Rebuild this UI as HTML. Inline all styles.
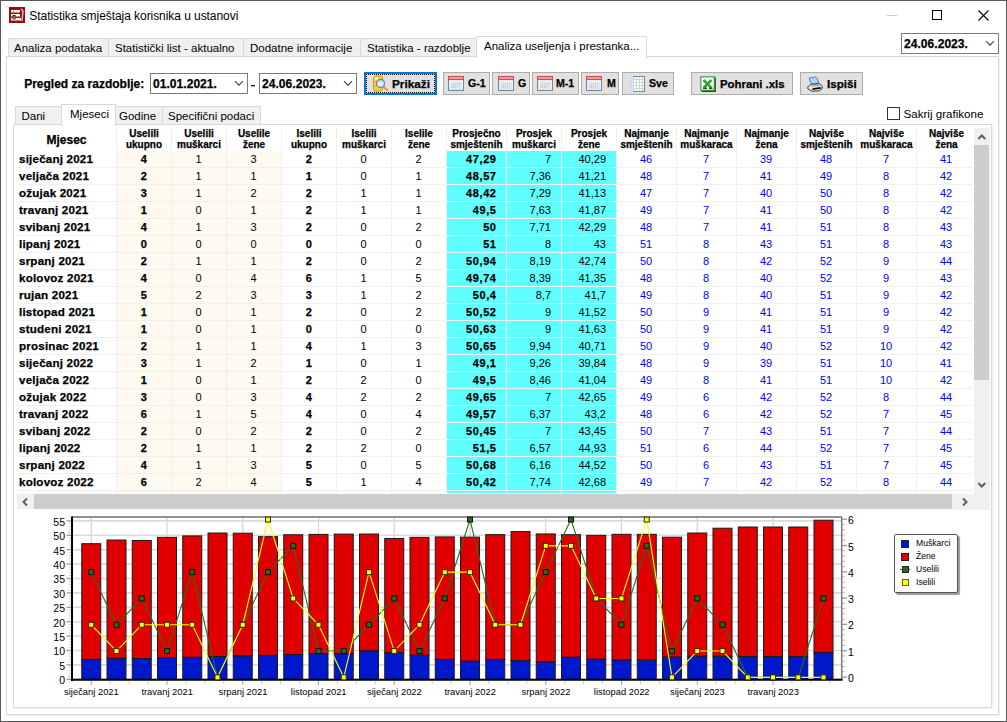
<!DOCTYPE html>
<html><head><meta charset="utf-8"><title>Statistika</title>
<style>
html,body{margin:0;padding:0;}
body{width:1007px;height:722px;position:relative;overflow:hidden;background:#fff;font-family:"Liberation Sans", sans-serif;}
</style></head><body>
<div style="position:absolute;left:0;top:0;width:1005px;height:720px;border:1px solid #595959;"></div>
<svg style="position:absolute;left:9px;top:7px" width="16" height="16" viewBox="0 0 16 16">
<rect x="0" y="0" width="16" height="16" fill="#9c0a0a"/>
<rect x="2" y="3" width="9" height="2.5" fill="#fff"/>
<rect x="2" y="7" width="9" height="2.5" fill="#fff"/>
<rect x="2" y="11" width="10" height="2.5" fill="#fff"/>
<path d="M12 2 L14 4 L13 14" stroke="#f3d0d0" stroke-width="1.3" fill="none"/>
<circle cx="5" cy="10.5" r="2.3" fill="#6a6a6a"/><path d="M3.3 9.2 Q5 7.6 6.8 9" stroke="#222" stroke-width="1" fill="none"/><rect x="4" y="4" width="1" height="1" fill="#c33"/>
</svg>
<div style="position:absolute;left:29.3px;top:6px;font-size:12px;line-height:20px;font-weight:400;color:#000;text-align:left;white-space:pre;letter-spacing:-0.06px;">Statistika smještaja korisnika u ustanovi</div>
<div style="position:absolute;left:887px;top:15px;width:10px;height:1px;background:#c9c9c9;"></div>
<div style="position:absolute;left:932px;top:10px;width:8px;height:8px;border:1px solid #000;"></div>
<svg style="position:absolute;left:977px;top:9px" width="13" height="13" viewBox="0 0 13 13">
<path d="M1.5 1.5 L11.5 11.5 M11.5 1.5 L1.5 11.5" stroke="#000" stroke-width="1.1"/></svg>
<div style="position:absolute;left:6px;top:56px;width:991px;height:657px;border:1px solid #d9d9d9;box-shadow:1px 1px 0 #f0f0f0;background:#fff"></div>
<div style="position:absolute;left:8px;top:38px;width:99px;height:17px;border:1px solid #d9d9d9;border-bottom:none;background:#f0f0f0"></div>
<div style="position:absolute;left:14px;top:38px;font-size:11.5px;line-height:20px;font-weight:400;color:#000;text-align:left;white-space:pre;">Analiza podataka</div>
<div style="position:absolute;left:108px;top:38px;width:134px;height:17px;border:1px solid #d9d9d9;border-bottom:none;background:#f0f0f0"></div>
<div style="position:absolute;left:115px;top:38px;font-size:11.5px;line-height:20px;font-weight:400;color:#000;text-align:left;white-space:pre;">Statistički list - aktualno</div>
<div style="position:absolute;left:243px;top:38px;width:116px;height:17px;border:1px solid #d9d9d9;border-bottom:none;background:#f0f0f0"></div>
<div style="position:absolute;left:250px;top:38px;font-size:11.5px;line-height:20px;font-weight:400;color:#000;text-align:left;white-space:pre;">Dodatne informacije</div>
<div style="position:absolute;left:360px;top:38px;width:115px;height:17px;border:1px solid #d9d9d9;border-bottom:none;background:#f0f0f0"></div>
<div style="position:absolute;left:367px;top:38px;font-size:11.5px;line-height:20px;font-weight:400;color:#000;text-align:left;white-space:pre;">Statistika - razdoblje</div>
<div style="position:absolute;left:476px;top:36px;width:169px;height:21px;border:1px solid #d9d9d9;border-bottom:none;background:#fff"></div>
<div style="position:absolute;left:484px;top:36px;font-size:11.5px;line-height:20px;font-weight:400;color:#000;text-align:left;white-space:pre;">Analiza useljenja i prestanka...</div>
<div style="position:absolute;left:901px;top:33px;width:96px;height:19px;border:1px solid #7a7a7a;background:#fff"></div>
<div style="position:absolute;left:904px;top:34px;font-size:12px;line-height:20px;font-weight:700;color:#000;text-align:left;white-space:pre;letter-spacing:0.05px;-webkit-text-stroke:0.25px #000;">24.06.2023.</div>
<svg style="position:absolute;left:985px;top:40px" width="11" height="7" viewBox="0 0 11 7"><path d="M1 1.2 L5 5.2 L9 1.2" stroke="#444" stroke-width="1.15" fill="none"/></svg>
<div style="position:absolute;left:24.2px;top:74px;font-size:12px;line-height:20px;font-weight:700;color:#000;text-align:left;white-space:pre;-webkit-text-stroke:0.25px #000;">Pregled za razdoblje:</div>
<div style="position:absolute;left:150px;top:73px;width:96px;height:19px;border:1px solid #7a7a7a;background:#fff"></div>
<div style="position:absolute;left:153px;top:74px;font-size:12px;line-height:20px;font-weight:700;color:#000;text-align:left;white-space:pre;letter-spacing:0.05px;-webkit-text-stroke:0.25px #000;">01.01.2021.</div>
<svg style="position:absolute;left:234px;top:80px" width="11" height="7" viewBox="0 0 11 7"><path d="M1 1.2 L5 5.2 L9 1.2" stroke="#444" stroke-width="1.15" fill="none"/></svg>
<div style="position:absolute;left:251px;top:85px;width:4px;height:1px;background:#111;"></div>
<div style="position:absolute;left:251px;top:86px;width:4px;height:1px;background:#aaa;"></div>
<div style="position:absolute;left:259px;top:73px;width:96px;height:19px;border:1px solid #7a7a7a;background:#fff"></div>
<div style="position:absolute;left:262px;top:74px;font-size:12px;line-height:20px;font-weight:700;color:#000;text-align:left;white-space:pre;letter-spacing:0.05px;-webkit-text-stroke:0.25px #000;">24.06.2023.</div>
<svg style="position:absolute;left:343px;top:80px" width="11" height="7" viewBox="0 0 11 7"><path d="M1 1.2 L5 5.2 L9 1.2" stroke="#444" stroke-width="1.15" fill="none"/></svg>
<div style="position:absolute;left:364px;top:72px;width:69px;height:19px;border:2px solid #0078d7;background:#e1e1e1"></div>
<div style="position:absolute;left:366px;top:74px;width:67px;height:17px;border:1px dotted #000;"></div>
<svg style="position:absolute;left:371px;top:75px" width="18" height="17" viewBox="0 0 18 17">
<path d="M2.5 2.5 L4 1 H10 L11.5 2.5 V14.5 L10 16 H4 L2.5 14.5 Z" fill="#f7d33a" stroke="#c79a12" stroke-width="1"/>
<path d="M3.5 6.5 H7 M3.5 10.5 H7" stroke="#d8a819" stroke-width="1"/>
<rect x="4" y="2.5" width="3" height="2" fill="#fff7c0"/>
<path d="M12.5 11.5 L16 15" stroke="#f29a35" stroke-width="2.4" stroke-linecap="round"/>
<circle cx="9.5" cy="8.5" r="4" fill="#d9f3fc" stroke="#6d7fb8" stroke-width="1.3"/>
<path d="M7.5 7 Q8.5 5.5 10.5 6" stroke="#8fc8ee" stroke-width="1.2" fill="none"/>
</svg>
<div style="position:absolute;left:392px;top:74px;font-size:11.8px;line-height:20px;font-weight:700;color:#000;text-align:left;white-space:pre;-webkit-text-stroke:0.25px #000;">Prikaži</div>
<div style="position:absolute;left:443px;top:72px;width:45px;height:21px;border:1px solid #adadad;background:#e1e1e1"></div>
<svg style="position:absolute;left:448px;top:76px" width="16" height="16" viewBox="0 0 16 16" shape-rendering="crispEdges">
<rect x="1" y="4" width="14" height="11" fill="#e6e6e6"/>
<rect x="2" y="5" width="12" height="9" fill="none" stroke="#f2f2f2" stroke-width="1"/>
<path d="M0.5 4 V14.5 H15.5 V4" fill="none" stroke="#6f8aa3" stroke-width="1"/>
<rect x="0.5" y="0.5" width="15" height="3" fill="#f59a9e" stroke="#cf4d56" stroke-width="1"/>
<rect x="5" y="7" width="1" height="1" fill="#a9c6dc"/><rect x="7" y="7" width="1" height="1" fill="#a9c6dc"/><rect x="9" y="7" width="1" height="1" fill="#a9c6dc"/><rect x="11" y="7" width="1" height="1" fill="#a9c6dc"/><rect x="3" y="9" width="1" height="1" fill="#a9c6dc"/><rect x="5" y="9" width="1" height="1" fill="#a9c6dc"/><rect x="7" y="9" width="1" height="1" fill="#a9c6dc"/><rect x="9" y="9" width="1" height="1" fill="#a9c6dc"/><rect x="11" y="9" width="1" height="1" fill="#a9c6dc"/><rect x="3" y="11" width="1" height="1" fill="#a9c6dc"/><rect x="5" y="11" width="1" height="1" fill="#a9c6dc"/><rect x="7" y="11" width="1" height="1" fill="#a9c6dc"/><rect x="9" y="11" width="1" height="1" fill="#a9c6dc"/></svg>
<div style="position:absolute;left:468px;top:73px;font-size:10.6px;line-height:20px;font-weight:700;color:#000;text-align:left;white-space:pre;-webkit-text-stroke:0.25px #000;">G-1</div>
<div style="position:absolute;left:492px;top:72px;width:36px;height:21px;border:1px solid #adadad;background:#e1e1e1"></div>
<svg style="position:absolute;left:498px;top:76px" width="16" height="16" viewBox="0 0 16 16" shape-rendering="crispEdges">
<rect x="1" y="4" width="14" height="11" fill="#e6e6e6"/>
<rect x="2" y="5" width="12" height="9" fill="none" stroke="#f2f2f2" stroke-width="1"/>
<path d="M0.5 4 V14.5 H15.5 V4" fill="none" stroke="#6f8aa3" stroke-width="1"/>
<rect x="0.5" y="0.5" width="15" height="3" fill="#f59a9e" stroke="#cf4d56" stroke-width="1"/>
<rect x="5" y="7" width="1" height="1" fill="#a9c6dc"/><rect x="7" y="7" width="1" height="1" fill="#a9c6dc"/><rect x="9" y="7" width="1" height="1" fill="#a9c6dc"/><rect x="11" y="7" width="1" height="1" fill="#a9c6dc"/><rect x="3" y="9" width="1" height="1" fill="#a9c6dc"/><rect x="5" y="9" width="1" height="1" fill="#a9c6dc"/><rect x="7" y="9" width="1" height="1" fill="#a9c6dc"/><rect x="9" y="9" width="1" height="1" fill="#a9c6dc"/><rect x="11" y="9" width="1" height="1" fill="#a9c6dc"/><rect x="3" y="11" width="1" height="1" fill="#a9c6dc"/><rect x="5" y="11" width="1" height="1" fill="#a9c6dc"/><rect x="7" y="11" width="1" height="1" fill="#a9c6dc"/><rect x="9" y="11" width="1" height="1" fill="#a9c6dc"/></svg>
<div style="position:absolute;left:518px;top:73px;font-size:10.6px;line-height:20px;font-weight:700;color:#000;text-align:left;white-space:pre;-webkit-text-stroke:0.25px #000;">G</div>
<div style="position:absolute;left:532px;top:72px;width:45px;height:21px;border:1px solid #adadad;background:#e1e1e1"></div>
<svg style="position:absolute;left:537px;top:76px" width="16" height="16" viewBox="0 0 16 16" shape-rendering="crispEdges">
<rect x="1" y="4" width="14" height="11" fill="#e6e6e6"/>
<rect x="2" y="5" width="12" height="9" fill="none" stroke="#f2f2f2" stroke-width="1"/>
<path d="M0.5 4 V14.5 H15.5 V4" fill="none" stroke="#6f8aa3" stroke-width="1"/>
<rect x="0.5" y="0.5" width="15" height="3" fill="#f59a9e" stroke="#cf4d56" stroke-width="1"/>
<rect x="5" y="7" width="1" height="1" fill="#a9c6dc"/><rect x="7" y="7" width="1" height="1" fill="#a9c6dc"/><rect x="9" y="7" width="1" height="1" fill="#a9c6dc"/><rect x="11" y="7" width="1" height="1" fill="#a9c6dc"/><rect x="3" y="9" width="1" height="1" fill="#a9c6dc"/><rect x="5" y="9" width="1" height="1" fill="#a9c6dc"/><rect x="7" y="9" width="1" height="1" fill="#a9c6dc"/><rect x="9" y="9" width="1" height="1" fill="#a9c6dc"/><rect x="11" y="9" width="1" height="1" fill="#a9c6dc"/><rect x="3" y="11" width="1" height="1" fill="#a9c6dc"/><rect x="5" y="11" width="1" height="1" fill="#a9c6dc"/><rect x="7" y="11" width="1" height="1" fill="#a9c6dc"/><rect x="9" y="11" width="1" height="1" fill="#a9c6dc"/></svg>
<div style="position:absolute;left:556px;top:73px;font-size:10.6px;line-height:20px;font-weight:700;color:#000;text-align:left;white-space:pre;-webkit-text-stroke:0.25px #000;">M-1</div>
<div style="position:absolute;left:581px;top:72px;width:36px;height:21px;border:1px solid #adadad;background:#e1e1e1"></div>
<svg style="position:absolute;left:586px;top:76px" width="16" height="16" viewBox="0 0 16 16" shape-rendering="crispEdges">
<rect x="1" y="4" width="14" height="11" fill="#e6e6e6"/>
<rect x="2" y="5" width="12" height="9" fill="none" stroke="#f2f2f2" stroke-width="1"/>
<path d="M0.5 4 V14.5 H15.5 V4" fill="none" stroke="#6f8aa3" stroke-width="1"/>
<rect x="0.5" y="0.5" width="15" height="3" fill="#f59a9e" stroke="#cf4d56" stroke-width="1"/>
<rect x="5" y="7" width="1" height="1" fill="#a9c6dc"/><rect x="7" y="7" width="1" height="1" fill="#a9c6dc"/><rect x="9" y="7" width="1" height="1" fill="#a9c6dc"/><rect x="11" y="7" width="1" height="1" fill="#a9c6dc"/><rect x="3" y="9" width="1" height="1" fill="#a9c6dc"/><rect x="5" y="9" width="1" height="1" fill="#a9c6dc"/><rect x="7" y="9" width="1" height="1" fill="#a9c6dc"/><rect x="9" y="9" width="1" height="1" fill="#a9c6dc"/><rect x="11" y="9" width="1" height="1" fill="#a9c6dc"/><rect x="3" y="11" width="1" height="1" fill="#a9c6dc"/><rect x="5" y="11" width="1" height="1" fill="#a9c6dc"/><rect x="7" y="11" width="1" height="1" fill="#a9c6dc"/><rect x="9" y="11" width="1" height="1" fill="#a9c6dc"/></svg>
<div style="position:absolute;left:607px;top:73px;font-size:10.6px;line-height:20px;font-weight:700;color:#000;text-align:left;white-space:pre;-webkit-text-stroke:0.25px #000;">M</div>
<div style="position:absolute;left:622px;top:72px;width:50px;height:21px;border:1px solid #adadad;background:#e1e1e1"></div>
<svg style="position:absolute;left:633px;top:76px" width="12" height="16" viewBox="0 0 12 16" shape-rendering="crispEdges">
<rect x="0" y="0" width="12" height="16" fill="#c8d6e1"/>
<rect x="1" y="1" width="2" height="2" fill="#fff"/><rect x="1" y="4" width="2" height="2" fill="#fff"/><rect x="1" y="7" width="2" height="2" fill="#fff"/><rect x="1" y="10" width="2" height="2" fill="#fff"/><rect x="1" y="13" width="2" height="2" fill="#fff"/><rect x="4" y="1" width="2" height="2" fill="#fff"/><rect x="4" y="4" width="2" height="2" fill="#fff"/><rect x="4" y="7" width="2" height="2" fill="#fff"/><rect x="4" y="10" width="2" height="2" fill="#fff"/><rect x="4" y="13" width="2" height="2" fill="#fff"/><rect x="7" y="1" width="2" height="2" fill="#fff"/><rect x="7" y="4" width="2" height="2" fill="#fff"/><rect x="7" y="7" width="2" height="2" fill="#fff"/><rect x="7" y="10" width="2" height="2" fill="#fff"/><rect x="7" y="13" width="2" height="2" fill="#fff"/><rect x="10" y="1" width="2" height="2" fill="#fff"/><rect x="10" y="4" width="2" height="2" fill="#fff"/><rect x="10" y="7" width="2" height="2" fill="#fff"/><rect x="10" y="10" width="2" height="2" fill="#fff"/><rect x="10" y="13" width="2" height="2" fill="#fff"/>
<path d="M0 0.5 H11.5 V15.5 H0" fill="none" stroke="#6f8aa3" stroke-width="1"/>
</svg>
<svg style="position:absolute;left:630px;top:76px" width="2" height="16" viewBox="0 0 2 16" shape-rendering="crispEdges"><rect x="0" y="1" width="2" height="2" fill="#b5e0fb"/><rect x="0" y="4" width="2" height="2" fill="#b5e0fb"/><rect x="0" y="7" width="2" height="2" fill="#b5e0fb"/><rect x="0" y="10" width="2" height="2" fill="#b5e0fb"/><rect x="0" y="13" width="2" height="2" fill="#b5e0fb"/></svg>
<div style="position:absolute;left:649px;top:73px;font-size:10.6px;line-height:20px;font-weight:700;color:#000;text-align:left;white-space:pre;-webkit-text-stroke:0.25px #000;">Sve</div>
<div style="position:absolute;left:691px;top:72px;width:100px;height:21px;border:1px solid #adadad;background:#e1e1e1"></div>
<svg style="position:absolute;left:700px;top:76px" width="16" height="16" viewBox="0 0 16 16">
<rect x="0.8" y="0.8" width="13.6" height="13.6" fill="#fff" stroke="#66b266" stroke-width="1.6"/>
<path d="M15.2 1.5 V15.2 H1.5" fill="none" stroke="#1d5c1d" stroke-width="1.4"/>
<path d="M3.5 4 L11.5 12 M11.5 4 L3.5 12" stroke="#39a13f" stroke-width="2.6"/>
<path d="M3 12.2 H7 M9 12.2 H12.5" stroke="#13641b" stroke-width="1.4"/>
</svg>
<div style="position:absolute;left:720px;top:74px;font-size:11.4px;line-height:20px;font-weight:700;color:#000;text-align:left;white-space:pre;-webkit-text-stroke:0.25px #000;">Pohrani .xls</div>
<div style="position:absolute;left:800px;top:72px;width:61px;height:21px;border:1px solid #adadad;background:#e1e1e1"></div>
<svg style="position:absolute;left:807px;top:76px" width="16" height="16" viewBox="0 0 16 16">
<path d="M2 2.5 L4.5 1.2 L6 2 L8.5 0.8 L10.2 2.5 L11.8 6.8 L5 8.5 Z" fill="#a8dcfb" stroke="#6b68cf" stroke-width="1"/>
<path d="M0.8 11 L3.5 8.2 L12.5 7.8 L15.2 10 L15.2 12.5 L12 15 L5 15.2 L0.8 12.8 Z" fill="#e6e6e6" stroke="#2a2a2a" stroke-width="0.9"/>
<path d="M5.5 13.2 L13.8 11.8" stroke="#0a0a0a" stroke-width="1.8"/>
<path d="M4 10 L12 9.5" stroke="#8c8c8c" stroke-width="0.9"/>
</svg>
<div style="position:absolute;left:827px;top:74px;font-size:11.6px;line-height:20px;font-weight:700;color:#000;text-align:left;white-space:pre;-webkit-text-stroke:0.25px #000;">Ispiši</div>
<div style="position:absolute;left:13px;top:124px;width:977px;height:582px;border:1px solid #d9d9d9;box-shadow:1px 1px 0 #f0f0f0;background:#fff"></div>
<div style="position:absolute;left:15px;top:106px;width:45px;height:17px;border:1px solid #d9d9d9;border-bottom:none;background:#f0f0f0"></div>
<div style="position:absolute;left:21.5px;top:106px;font-size:11.5px;line-height:20px;font-weight:400;color:#000;text-align:left;white-space:pre;">Dani</div>
<div style="position:absolute;left:114px;top:106px;width:47px;height:17px;border:1px solid #d9d9d9;border-bottom:none;background:#f0f0f0"></div>
<div style="position:absolute;left:119px;top:106px;font-size:11.5px;line-height:20px;font-weight:400;color:#000;text-align:left;white-space:pre;">Godine</div>
<div style="position:absolute;left:162px;top:106px;width:97px;height:17px;border:1px solid #d9d9d9;border-bottom:none;background:#f0f0f0"></div>
<div style="position:absolute;left:168px;top:106px;font-size:11.5px;line-height:20px;font-weight:400;color:#000;text-align:left;white-space:pre;">Specifični podaci</div>
<div style="position:absolute;left:61px;top:104px;width:53px;height:21px;border:1px solid #d9d9d9;border-bottom:none;background:#fff"></div>
<div style="position:absolute;left:70px;top:104px;font-size:11.5px;line-height:20px;font-weight:400;color:#000;text-align:left;white-space:pre;">Mjeseci</div>
<div style="position:absolute;left:887px;top:107px;width:11px;height:11px;border:1px solid #333;background:#fff;"></div>
<div style="position:absolute;left:903.5px;top:104px;font-size:11.6px;line-height:20px;font-weight:400;color:#000;text-align:left;white-space:pre;">Sakrij grafikone</div>
<div style="position:absolute;left:117px;top:151px;width:164px;height:342px;background:#fffaf0;"></div>
<div style="position:absolute;left:447px;top:151px;width:169px;height:342px;background:#60ffff;"></div>
<div style="position:absolute;left:116px;top:128px;width:1px;height:365px;background:#f0f0f0;"></div>
<div style="position:absolute;left:171px;top:128px;width:1px;height:365px;background:#f0f0f0;"></div>
<div style="position:absolute;left:226px;top:128px;width:1px;height:365px;background:#f0f0f0;"></div>
<div style="position:absolute;left:281px;top:128px;width:1px;height:365px;background:#f0f0f0;"></div>
<div style="position:absolute;left:336px;top:128px;width:1px;height:365px;background:#f0f0f0;"></div>
<div style="position:absolute;left:391px;top:128px;width:1px;height:365px;background:#f0f0f0;"></div>
<div style="position:absolute;left:446px;top:128px;width:1px;height:365px;background:#f0f0f0;"></div>
<div style="position:absolute;left:506px;top:128px;width:1px;height:365px;background:#f0f0f0;"></div>
<div style="position:absolute;left:561px;top:128px;width:1px;height:365px;background:#f0f0f0;"></div>
<div style="position:absolute;left:616px;top:128px;width:1px;height:365px;background:#f0f0f0;"></div>
<div style="position:absolute;left:676px;top:128px;width:1px;height:365px;background:#f0f0f0;"></div>
<div style="position:absolute;left:736px;top:128px;width:1px;height:365px;background:#f0f0f0;"></div>
<div style="position:absolute;left:796px;top:128px;width:1px;height:365px;background:#f0f0f0;"></div>
<div style="position:absolute;left:856px;top:128px;width:1px;height:365px;background:#f0f0f0;"></div>
<div style="position:absolute;left:916px;top:128px;width:1px;height:365px;background:#f0f0f0;"></div>
<div style="position:absolute;left:17px;top:167px;width:956px;height:1px;background:#f0f0f0;"></div>
<div style="position:absolute;left:17px;top:184px;width:956px;height:1px;background:#f0f0f0;"></div>
<div style="position:absolute;left:17px;top:201px;width:956px;height:1px;background:#f0f0f0;"></div>
<div style="position:absolute;left:17px;top:218px;width:956px;height:1px;background:#f0f0f0;"></div>
<div style="position:absolute;left:17px;top:235px;width:956px;height:1px;background:#f0f0f0;"></div>
<div style="position:absolute;left:17px;top:252px;width:956px;height:1px;background:#f0f0f0;"></div>
<div style="position:absolute;left:17px;top:269px;width:956px;height:1px;background:#f0f0f0;"></div>
<div style="position:absolute;left:17px;top:286px;width:956px;height:1px;background:#f0f0f0;"></div>
<div style="position:absolute;left:17px;top:303px;width:956px;height:1px;background:#f0f0f0;"></div>
<div style="position:absolute;left:17px;top:320px;width:956px;height:1px;background:#f0f0f0;"></div>
<div style="position:absolute;left:17px;top:337px;width:956px;height:1px;background:#f0f0f0;"></div>
<div style="position:absolute;left:17px;top:354px;width:956px;height:1px;background:#f0f0f0;"></div>
<div style="position:absolute;left:17px;top:371px;width:956px;height:1px;background:#f0f0f0;"></div>
<div style="position:absolute;left:17px;top:388px;width:956px;height:1px;background:#f0f0f0;"></div>
<div style="position:absolute;left:17px;top:405px;width:956px;height:1px;background:#f0f0f0;"></div>
<div style="position:absolute;left:17px;top:422px;width:956px;height:1px;background:#f0f0f0;"></div>
<div style="position:absolute;left:17px;top:439px;width:956px;height:1px;background:#f0f0f0;"></div>
<div style="position:absolute;left:17px;top:456px;width:956px;height:1px;background:#f0f0f0;"></div>
<div style="position:absolute;left:17px;top:473px;width:956px;height:1px;background:#f0f0f0;"></div>
<div style="position:absolute;left:17px;top:490px;width:956px;height:1px;background:#f0f0f0;"></div>
<div style="position:absolute;left:17px;top:130px;width:99px;font-size:12px;line-height:20px;font-weight:700;color:#000;text-align:center;white-space:pre;-webkit-text-stroke:0.25px #000;">Mjesec</div>
<div style="position:absolute;left:117px;top:124px;width:54px;font-size:10px;line-height:20px;font-weight:700;color:#000;text-align:center;white-space:pre;-webkit-text-stroke:0.25px #000;">Uselili</div>
<div style="position:absolute;left:117px;top:135px;width:54px;font-size:10px;line-height:20px;font-weight:700;color:#000;text-align:center;white-space:pre;-webkit-text-stroke:0.25px #000;">ukupno</div>
<div style="position:absolute;left:172px;top:124px;width:54px;font-size:10px;line-height:20px;font-weight:700;color:#000;text-align:center;white-space:pre;-webkit-text-stroke:0.25px #000;">Uselili</div>
<div style="position:absolute;left:172px;top:135px;width:54px;font-size:10px;line-height:20px;font-weight:700;color:#000;text-align:center;white-space:pre;-webkit-text-stroke:0.25px #000;">muškarci</div>
<div style="position:absolute;left:227px;top:124px;width:54px;font-size:10px;line-height:20px;font-weight:700;color:#000;text-align:center;white-space:pre;-webkit-text-stroke:0.25px #000;">Uselile</div>
<div style="position:absolute;left:227px;top:135px;width:54px;font-size:10px;line-height:20px;font-weight:700;color:#000;text-align:center;white-space:pre;-webkit-text-stroke:0.25px #000;">žene</div>
<div style="position:absolute;left:282px;top:124px;width:54px;font-size:10px;line-height:20px;font-weight:700;color:#000;text-align:center;white-space:pre;-webkit-text-stroke:0.25px #000;">Iselili</div>
<div style="position:absolute;left:282px;top:135px;width:54px;font-size:10px;line-height:20px;font-weight:700;color:#000;text-align:center;white-space:pre;-webkit-text-stroke:0.25px #000;">ukupno</div>
<div style="position:absolute;left:337px;top:124px;width:54px;font-size:10px;line-height:20px;font-weight:700;color:#000;text-align:center;white-space:pre;-webkit-text-stroke:0.25px #000;">Iselili</div>
<div style="position:absolute;left:337px;top:135px;width:54px;font-size:10px;line-height:20px;font-weight:700;color:#000;text-align:center;white-space:pre;-webkit-text-stroke:0.25px #000;">muškarci</div>
<div style="position:absolute;left:392px;top:124px;width:54px;font-size:10px;line-height:20px;font-weight:700;color:#000;text-align:center;white-space:pre;-webkit-text-stroke:0.25px #000;">Iselile</div>
<div style="position:absolute;left:392px;top:135px;width:54px;font-size:10px;line-height:20px;font-weight:700;color:#000;text-align:center;white-space:pre;-webkit-text-stroke:0.25px #000;">žene</div>
<div style="position:absolute;left:447px;top:124px;width:59px;font-size:10px;line-height:20px;font-weight:700;color:#000;text-align:center;white-space:pre;-webkit-text-stroke:0.25px #000;">Prosječno</div>
<div style="position:absolute;left:447px;top:135px;width:59px;font-size:10px;line-height:20px;font-weight:700;color:#000;text-align:center;white-space:pre;-webkit-text-stroke:0.25px #000;">smještenih</div>
<div style="position:absolute;left:507px;top:124px;width:54px;font-size:10px;line-height:20px;font-weight:700;color:#000;text-align:center;white-space:pre;-webkit-text-stroke:0.25px #000;">Prosjek</div>
<div style="position:absolute;left:507px;top:135px;width:54px;font-size:10px;line-height:20px;font-weight:700;color:#000;text-align:center;white-space:pre;-webkit-text-stroke:0.25px #000;">muškarci</div>
<div style="position:absolute;left:562px;top:124px;width:54px;font-size:10px;line-height:20px;font-weight:700;color:#000;text-align:center;white-space:pre;-webkit-text-stroke:0.25px #000;">Prosjek</div>
<div style="position:absolute;left:562px;top:135px;width:54px;font-size:10px;line-height:20px;font-weight:700;color:#000;text-align:center;white-space:pre;-webkit-text-stroke:0.25px #000;">žene</div>
<div style="position:absolute;left:617px;top:124px;width:59px;font-size:10px;line-height:20px;font-weight:700;color:#000;text-align:center;white-space:pre;-webkit-text-stroke:0.25px #000;">Najmanje</div>
<div style="position:absolute;left:617px;top:135px;width:59px;font-size:10px;line-height:20px;font-weight:700;color:#000;text-align:center;white-space:pre;-webkit-text-stroke:0.25px #000;">smještenih</div>
<div style="position:absolute;left:677px;top:124px;width:59px;font-size:10px;line-height:20px;font-weight:700;color:#000;text-align:center;white-space:pre;-webkit-text-stroke:0.25px #000;">Najmanje</div>
<div style="position:absolute;left:677px;top:135px;width:59px;font-size:10px;line-height:20px;font-weight:700;color:#000;text-align:center;white-space:pre;-webkit-text-stroke:0.25px #000;">muškaraca</div>
<div style="position:absolute;left:737px;top:124px;width:59px;font-size:10px;line-height:20px;font-weight:700;color:#000;text-align:center;white-space:pre;-webkit-text-stroke:0.25px #000;">Najmanje</div>
<div style="position:absolute;left:737px;top:135px;width:59px;font-size:10px;line-height:20px;font-weight:700;color:#000;text-align:center;white-space:pre;-webkit-text-stroke:0.25px #000;">žena</div>
<div style="position:absolute;left:797px;top:124px;width:59px;font-size:10px;line-height:20px;font-weight:700;color:#000;text-align:center;white-space:pre;-webkit-text-stroke:0.25px #000;">Najviše</div>
<div style="position:absolute;left:797px;top:135px;width:59px;font-size:10px;line-height:20px;font-weight:700;color:#000;text-align:center;white-space:pre;-webkit-text-stroke:0.25px #000;">smještenih</div>
<div style="position:absolute;left:857px;top:124px;width:59px;font-size:10px;line-height:20px;font-weight:700;color:#000;text-align:center;white-space:pre;-webkit-text-stroke:0.25px #000;">Najviše</div>
<div style="position:absolute;left:857px;top:135px;width:59px;font-size:10px;line-height:20px;font-weight:700;color:#000;text-align:center;white-space:pre;-webkit-text-stroke:0.25px #000;">muškaraca</div>
<div style="position:absolute;left:917px;top:124px;width:59px;font-size:10px;line-height:20px;font-weight:700;color:#000;text-align:center;white-space:pre;-webkit-text-stroke:0.25px #000;">Najviše</div>
<div style="position:absolute;left:917px;top:135px;width:59px;font-size:10px;line-height:20px;font-weight:700;color:#000;text-align:center;white-space:pre;-webkit-text-stroke:0.25px #000;">žena</div>
<div style="position:absolute;left:19px;top:149px;font-size:11.6px;line-height:20px;font-weight:700;color:#000;text-align:left;white-space:pre;letter-spacing:0.2px;-webkit-text-stroke:0.25px #000;">siječanj 2021</div>
<div style="position:absolute;left:117px;top:149px;width:54px;font-size:11px;line-height:20px;font-weight:700;color:#000;text-align:center;white-space:pre;letter-spacing:0.6px;-webkit-text-stroke:0.25px #000;">4</div>
<div style="position:absolute;left:171.6px;top:149px;width:54px;font-size:11px;line-height:20px;font-weight:400;color:#000;text-align:center;white-space:pre;">1</div>
<div style="position:absolute;left:226.6px;top:149px;width:54px;font-size:11px;line-height:20px;font-weight:400;color:#000;text-align:center;white-space:pre;">3</div>
<div style="position:absolute;left:282px;top:149px;width:54px;font-size:11px;line-height:20px;font-weight:700;color:#000;text-align:center;white-space:pre;letter-spacing:0.6px;-webkit-text-stroke:0.25px #000;">2</div>
<div style="position:absolute;left:336.6px;top:149px;width:54px;font-size:11px;line-height:20px;font-weight:400;color:#000;text-align:center;white-space:pre;">0</div>
<div style="position:absolute;left:391.6px;top:149px;width:54px;font-size:11px;line-height:20px;font-weight:400;color:#000;text-align:center;white-space:pre;">2</div>
<div style="position:absolute;left:447px;top:149px;width:49.6px;font-size:11px;line-height:20px;font-weight:700;color:#000;text-align:right;white-space:pre;letter-spacing:0.6px;-webkit-text-stroke:0.25px #000;">47,29</div>
<div style="position:absolute;left:507px;top:149px;width:44px;font-size:11px;line-height:20px;font-weight:400;color:#000;text-align:right;white-space:pre;">7</div>
<div style="position:absolute;left:562px;top:149px;width:44px;font-size:11px;line-height:20px;font-weight:400;color:#000;text-align:right;white-space:pre;">40,29</div>
<div style="position:absolute;left:616.6px;top:149px;width:59px;font-size:11px;line-height:20px;font-weight:400;color:#0000ff;text-align:center;white-space:pre;">46</div>
<div style="position:absolute;left:676.6px;top:149px;width:59px;font-size:11px;line-height:20px;font-weight:400;color:#0000ff;text-align:center;white-space:pre;">7</div>
<div style="position:absolute;left:736.6px;top:149px;width:59px;font-size:11px;line-height:20px;font-weight:400;color:#0000ff;text-align:center;white-space:pre;">39</div>
<div style="position:absolute;left:796.6px;top:149px;width:59px;font-size:11px;line-height:20px;font-weight:400;color:#0000ff;text-align:center;white-space:pre;">48</div>
<div style="position:absolute;left:856.6px;top:149px;width:59px;font-size:11px;line-height:20px;font-weight:400;color:#0000ff;text-align:center;white-space:pre;">7</div>
<div style="position:absolute;left:916.6px;top:149px;width:59px;font-size:11px;line-height:20px;font-weight:400;color:#0000ff;text-align:center;white-space:pre;">41</div>
<div style="position:absolute;left:19px;top:166px;font-size:11.6px;line-height:20px;font-weight:700;color:#000;text-align:left;white-space:pre;letter-spacing:0.2px;-webkit-text-stroke:0.25px #000;">veljača 2021</div>
<div style="position:absolute;left:117px;top:166px;width:54px;font-size:11px;line-height:20px;font-weight:700;color:#000;text-align:center;white-space:pre;letter-spacing:0.6px;-webkit-text-stroke:0.25px #000;">2</div>
<div style="position:absolute;left:171.6px;top:166px;width:54px;font-size:11px;line-height:20px;font-weight:400;color:#000;text-align:center;white-space:pre;">1</div>
<div style="position:absolute;left:226.6px;top:166px;width:54px;font-size:11px;line-height:20px;font-weight:400;color:#000;text-align:center;white-space:pre;">1</div>
<div style="position:absolute;left:282px;top:166px;width:54px;font-size:11px;line-height:20px;font-weight:700;color:#000;text-align:center;white-space:pre;letter-spacing:0.6px;-webkit-text-stroke:0.25px #000;">1</div>
<div style="position:absolute;left:336.6px;top:166px;width:54px;font-size:11px;line-height:20px;font-weight:400;color:#000;text-align:center;white-space:pre;">0</div>
<div style="position:absolute;left:391.6px;top:166px;width:54px;font-size:11px;line-height:20px;font-weight:400;color:#000;text-align:center;white-space:pre;">1</div>
<div style="position:absolute;left:447px;top:166px;width:49.6px;font-size:11px;line-height:20px;font-weight:700;color:#000;text-align:right;white-space:pre;letter-spacing:0.6px;-webkit-text-stroke:0.25px #000;">48,57</div>
<div style="position:absolute;left:507px;top:166px;width:44px;font-size:11px;line-height:20px;font-weight:400;color:#000;text-align:right;white-space:pre;">7,36</div>
<div style="position:absolute;left:562px;top:166px;width:44px;font-size:11px;line-height:20px;font-weight:400;color:#000;text-align:right;white-space:pre;">41,21</div>
<div style="position:absolute;left:616.6px;top:166px;width:59px;font-size:11px;line-height:20px;font-weight:400;color:#0000ff;text-align:center;white-space:pre;">48</div>
<div style="position:absolute;left:676.6px;top:166px;width:59px;font-size:11px;line-height:20px;font-weight:400;color:#0000ff;text-align:center;white-space:pre;">7</div>
<div style="position:absolute;left:736.6px;top:166px;width:59px;font-size:11px;line-height:20px;font-weight:400;color:#0000ff;text-align:center;white-space:pre;">41</div>
<div style="position:absolute;left:796.6px;top:166px;width:59px;font-size:11px;line-height:20px;font-weight:400;color:#0000ff;text-align:center;white-space:pre;">49</div>
<div style="position:absolute;left:856.6px;top:166px;width:59px;font-size:11px;line-height:20px;font-weight:400;color:#0000ff;text-align:center;white-space:pre;">8</div>
<div style="position:absolute;left:916.6px;top:166px;width:59px;font-size:11px;line-height:20px;font-weight:400;color:#0000ff;text-align:center;white-space:pre;">42</div>
<div style="position:absolute;left:19px;top:183px;font-size:11.6px;line-height:20px;font-weight:700;color:#000;text-align:left;white-space:pre;letter-spacing:0.2px;-webkit-text-stroke:0.25px #000;">ožujak 2021</div>
<div style="position:absolute;left:117px;top:183px;width:54px;font-size:11px;line-height:20px;font-weight:700;color:#000;text-align:center;white-space:pre;letter-spacing:0.6px;-webkit-text-stroke:0.25px #000;">3</div>
<div style="position:absolute;left:171.6px;top:183px;width:54px;font-size:11px;line-height:20px;font-weight:400;color:#000;text-align:center;white-space:pre;">1</div>
<div style="position:absolute;left:226.6px;top:183px;width:54px;font-size:11px;line-height:20px;font-weight:400;color:#000;text-align:center;white-space:pre;">2</div>
<div style="position:absolute;left:282px;top:183px;width:54px;font-size:11px;line-height:20px;font-weight:700;color:#000;text-align:center;white-space:pre;letter-spacing:0.6px;-webkit-text-stroke:0.25px #000;">2</div>
<div style="position:absolute;left:336.6px;top:183px;width:54px;font-size:11px;line-height:20px;font-weight:400;color:#000;text-align:center;white-space:pre;">1</div>
<div style="position:absolute;left:391.6px;top:183px;width:54px;font-size:11px;line-height:20px;font-weight:400;color:#000;text-align:center;white-space:pre;">1</div>
<div style="position:absolute;left:447px;top:183px;width:49.6px;font-size:11px;line-height:20px;font-weight:700;color:#000;text-align:right;white-space:pre;letter-spacing:0.6px;-webkit-text-stroke:0.25px #000;">48,42</div>
<div style="position:absolute;left:507px;top:183px;width:44px;font-size:11px;line-height:20px;font-weight:400;color:#000;text-align:right;white-space:pre;">7,29</div>
<div style="position:absolute;left:562px;top:183px;width:44px;font-size:11px;line-height:20px;font-weight:400;color:#000;text-align:right;white-space:pre;">41,13</div>
<div style="position:absolute;left:616.6px;top:183px;width:59px;font-size:11px;line-height:20px;font-weight:400;color:#0000ff;text-align:center;white-space:pre;">47</div>
<div style="position:absolute;left:676.6px;top:183px;width:59px;font-size:11px;line-height:20px;font-weight:400;color:#0000ff;text-align:center;white-space:pre;">7</div>
<div style="position:absolute;left:736.6px;top:183px;width:59px;font-size:11px;line-height:20px;font-weight:400;color:#0000ff;text-align:center;white-space:pre;">40</div>
<div style="position:absolute;left:796.6px;top:183px;width:59px;font-size:11px;line-height:20px;font-weight:400;color:#0000ff;text-align:center;white-space:pre;">50</div>
<div style="position:absolute;left:856.6px;top:183px;width:59px;font-size:11px;line-height:20px;font-weight:400;color:#0000ff;text-align:center;white-space:pre;">8</div>
<div style="position:absolute;left:916.6px;top:183px;width:59px;font-size:11px;line-height:20px;font-weight:400;color:#0000ff;text-align:center;white-space:pre;">42</div>
<div style="position:absolute;left:19px;top:200px;font-size:11.6px;line-height:20px;font-weight:700;color:#000;text-align:left;white-space:pre;letter-spacing:0.2px;-webkit-text-stroke:0.25px #000;">travanj 2021</div>
<div style="position:absolute;left:117px;top:200px;width:54px;font-size:11px;line-height:20px;font-weight:700;color:#000;text-align:center;white-space:pre;letter-spacing:0.6px;-webkit-text-stroke:0.25px #000;">1</div>
<div style="position:absolute;left:171.6px;top:200px;width:54px;font-size:11px;line-height:20px;font-weight:400;color:#000;text-align:center;white-space:pre;">0</div>
<div style="position:absolute;left:226.6px;top:200px;width:54px;font-size:11px;line-height:20px;font-weight:400;color:#000;text-align:center;white-space:pre;">1</div>
<div style="position:absolute;left:282px;top:200px;width:54px;font-size:11px;line-height:20px;font-weight:700;color:#000;text-align:center;white-space:pre;letter-spacing:0.6px;-webkit-text-stroke:0.25px #000;">2</div>
<div style="position:absolute;left:336.6px;top:200px;width:54px;font-size:11px;line-height:20px;font-weight:400;color:#000;text-align:center;white-space:pre;">1</div>
<div style="position:absolute;left:391.6px;top:200px;width:54px;font-size:11px;line-height:20px;font-weight:400;color:#000;text-align:center;white-space:pre;">1</div>
<div style="position:absolute;left:447px;top:200px;width:49.6px;font-size:11px;line-height:20px;font-weight:700;color:#000;text-align:right;white-space:pre;letter-spacing:0.6px;-webkit-text-stroke:0.25px #000;">49,5</div>
<div style="position:absolute;left:507px;top:200px;width:44px;font-size:11px;line-height:20px;font-weight:400;color:#000;text-align:right;white-space:pre;">7,63</div>
<div style="position:absolute;left:562px;top:200px;width:44px;font-size:11px;line-height:20px;font-weight:400;color:#000;text-align:right;white-space:pre;">41,87</div>
<div style="position:absolute;left:616.6px;top:200px;width:59px;font-size:11px;line-height:20px;font-weight:400;color:#0000ff;text-align:center;white-space:pre;">49</div>
<div style="position:absolute;left:676.6px;top:200px;width:59px;font-size:11px;line-height:20px;font-weight:400;color:#0000ff;text-align:center;white-space:pre;">7</div>
<div style="position:absolute;left:736.6px;top:200px;width:59px;font-size:11px;line-height:20px;font-weight:400;color:#0000ff;text-align:center;white-space:pre;">41</div>
<div style="position:absolute;left:796.6px;top:200px;width:59px;font-size:11px;line-height:20px;font-weight:400;color:#0000ff;text-align:center;white-space:pre;">50</div>
<div style="position:absolute;left:856.6px;top:200px;width:59px;font-size:11px;line-height:20px;font-weight:400;color:#0000ff;text-align:center;white-space:pre;">8</div>
<div style="position:absolute;left:916.6px;top:200px;width:59px;font-size:11px;line-height:20px;font-weight:400;color:#0000ff;text-align:center;white-space:pre;">42</div>
<div style="position:absolute;left:19px;top:217px;font-size:11.6px;line-height:20px;font-weight:700;color:#000;text-align:left;white-space:pre;letter-spacing:0.2px;-webkit-text-stroke:0.25px #000;">svibanj 2021</div>
<div style="position:absolute;left:117px;top:217px;width:54px;font-size:11px;line-height:20px;font-weight:700;color:#000;text-align:center;white-space:pre;letter-spacing:0.6px;-webkit-text-stroke:0.25px #000;">4</div>
<div style="position:absolute;left:171.6px;top:217px;width:54px;font-size:11px;line-height:20px;font-weight:400;color:#000;text-align:center;white-space:pre;">1</div>
<div style="position:absolute;left:226.6px;top:217px;width:54px;font-size:11px;line-height:20px;font-weight:400;color:#000;text-align:center;white-space:pre;">3</div>
<div style="position:absolute;left:282px;top:217px;width:54px;font-size:11px;line-height:20px;font-weight:700;color:#000;text-align:center;white-space:pre;letter-spacing:0.6px;-webkit-text-stroke:0.25px #000;">2</div>
<div style="position:absolute;left:336.6px;top:217px;width:54px;font-size:11px;line-height:20px;font-weight:400;color:#000;text-align:center;white-space:pre;">0</div>
<div style="position:absolute;left:391.6px;top:217px;width:54px;font-size:11px;line-height:20px;font-weight:400;color:#000;text-align:center;white-space:pre;">2</div>
<div style="position:absolute;left:447px;top:217px;width:49.6px;font-size:11px;line-height:20px;font-weight:700;color:#000;text-align:right;white-space:pre;letter-spacing:0.6px;-webkit-text-stroke:0.25px #000;">50</div>
<div style="position:absolute;left:507px;top:217px;width:44px;font-size:11px;line-height:20px;font-weight:400;color:#000;text-align:right;white-space:pre;">7,71</div>
<div style="position:absolute;left:562px;top:217px;width:44px;font-size:11px;line-height:20px;font-weight:400;color:#000;text-align:right;white-space:pre;">42,29</div>
<div style="position:absolute;left:616.6px;top:217px;width:59px;font-size:11px;line-height:20px;font-weight:400;color:#0000ff;text-align:center;white-space:pre;">48</div>
<div style="position:absolute;left:676.6px;top:217px;width:59px;font-size:11px;line-height:20px;font-weight:400;color:#0000ff;text-align:center;white-space:pre;">7</div>
<div style="position:absolute;left:736.6px;top:217px;width:59px;font-size:11px;line-height:20px;font-weight:400;color:#0000ff;text-align:center;white-space:pre;">41</div>
<div style="position:absolute;left:796.6px;top:217px;width:59px;font-size:11px;line-height:20px;font-weight:400;color:#0000ff;text-align:center;white-space:pre;">51</div>
<div style="position:absolute;left:856.6px;top:217px;width:59px;font-size:11px;line-height:20px;font-weight:400;color:#0000ff;text-align:center;white-space:pre;">8</div>
<div style="position:absolute;left:916.6px;top:217px;width:59px;font-size:11px;line-height:20px;font-weight:400;color:#0000ff;text-align:center;white-space:pre;">43</div>
<div style="position:absolute;left:19px;top:234px;font-size:11.6px;line-height:20px;font-weight:700;color:#000;text-align:left;white-space:pre;letter-spacing:0.2px;-webkit-text-stroke:0.25px #000;">lipanj 2021</div>
<div style="position:absolute;left:117px;top:234px;width:54px;font-size:11px;line-height:20px;font-weight:700;color:#000;text-align:center;white-space:pre;letter-spacing:0.6px;-webkit-text-stroke:0.25px #000;">0</div>
<div style="position:absolute;left:171.6px;top:234px;width:54px;font-size:11px;line-height:20px;font-weight:400;color:#000;text-align:center;white-space:pre;">0</div>
<div style="position:absolute;left:226.6px;top:234px;width:54px;font-size:11px;line-height:20px;font-weight:400;color:#000;text-align:center;white-space:pre;">0</div>
<div style="position:absolute;left:282px;top:234px;width:54px;font-size:11px;line-height:20px;font-weight:700;color:#000;text-align:center;white-space:pre;letter-spacing:0.6px;-webkit-text-stroke:0.25px #000;">0</div>
<div style="position:absolute;left:336.6px;top:234px;width:54px;font-size:11px;line-height:20px;font-weight:400;color:#000;text-align:center;white-space:pre;">0</div>
<div style="position:absolute;left:391.6px;top:234px;width:54px;font-size:11px;line-height:20px;font-weight:400;color:#000;text-align:center;white-space:pre;">0</div>
<div style="position:absolute;left:447px;top:234px;width:49.6px;font-size:11px;line-height:20px;font-weight:700;color:#000;text-align:right;white-space:pre;letter-spacing:0.6px;-webkit-text-stroke:0.25px #000;">51</div>
<div style="position:absolute;left:507px;top:234px;width:44px;font-size:11px;line-height:20px;font-weight:400;color:#000;text-align:right;white-space:pre;">8</div>
<div style="position:absolute;left:562px;top:234px;width:44px;font-size:11px;line-height:20px;font-weight:400;color:#000;text-align:right;white-space:pre;">43</div>
<div style="position:absolute;left:616.6px;top:234px;width:59px;font-size:11px;line-height:20px;font-weight:400;color:#0000ff;text-align:center;white-space:pre;">51</div>
<div style="position:absolute;left:676.6px;top:234px;width:59px;font-size:11px;line-height:20px;font-weight:400;color:#0000ff;text-align:center;white-space:pre;">8</div>
<div style="position:absolute;left:736.6px;top:234px;width:59px;font-size:11px;line-height:20px;font-weight:400;color:#0000ff;text-align:center;white-space:pre;">43</div>
<div style="position:absolute;left:796.6px;top:234px;width:59px;font-size:11px;line-height:20px;font-weight:400;color:#0000ff;text-align:center;white-space:pre;">51</div>
<div style="position:absolute;left:856.6px;top:234px;width:59px;font-size:11px;line-height:20px;font-weight:400;color:#0000ff;text-align:center;white-space:pre;">8</div>
<div style="position:absolute;left:916.6px;top:234px;width:59px;font-size:11px;line-height:20px;font-weight:400;color:#0000ff;text-align:center;white-space:pre;">43</div>
<div style="position:absolute;left:19px;top:251px;font-size:11.6px;line-height:20px;font-weight:700;color:#000;text-align:left;white-space:pre;letter-spacing:0.2px;-webkit-text-stroke:0.25px #000;">srpanj 2021</div>
<div style="position:absolute;left:117px;top:251px;width:54px;font-size:11px;line-height:20px;font-weight:700;color:#000;text-align:center;white-space:pre;letter-spacing:0.6px;-webkit-text-stroke:0.25px #000;">2</div>
<div style="position:absolute;left:171.6px;top:251px;width:54px;font-size:11px;line-height:20px;font-weight:400;color:#000;text-align:center;white-space:pre;">1</div>
<div style="position:absolute;left:226.6px;top:251px;width:54px;font-size:11px;line-height:20px;font-weight:400;color:#000;text-align:center;white-space:pre;">1</div>
<div style="position:absolute;left:282px;top:251px;width:54px;font-size:11px;line-height:20px;font-weight:700;color:#000;text-align:center;white-space:pre;letter-spacing:0.6px;-webkit-text-stroke:0.25px #000;">2</div>
<div style="position:absolute;left:336.6px;top:251px;width:54px;font-size:11px;line-height:20px;font-weight:400;color:#000;text-align:center;white-space:pre;">0</div>
<div style="position:absolute;left:391.6px;top:251px;width:54px;font-size:11px;line-height:20px;font-weight:400;color:#000;text-align:center;white-space:pre;">2</div>
<div style="position:absolute;left:447px;top:251px;width:49.6px;font-size:11px;line-height:20px;font-weight:700;color:#000;text-align:right;white-space:pre;letter-spacing:0.6px;-webkit-text-stroke:0.25px #000;">50,94</div>
<div style="position:absolute;left:507px;top:251px;width:44px;font-size:11px;line-height:20px;font-weight:400;color:#000;text-align:right;white-space:pre;">8,19</div>
<div style="position:absolute;left:562px;top:251px;width:44px;font-size:11px;line-height:20px;font-weight:400;color:#000;text-align:right;white-space:pre;">42,74</div>
<div style="position:absolute;left:616.6px;top:251px;width:59px;font-size:11px;line-height:20px;font-weight:400;color:#0000ff;text-align:center;white-space:pre;">50</div>
<div style="position:absolute;left:676.6px;top:251px;width:59px;font-size:11px;line-height:20px;font-weight:400;color:#0000ff;text-align:center;white-space:pre;">8</div>
<div style="position:absolute;left:736.6px;top:251px;width:59px;font-size:11px;line-height:20px;font-weight:400;color:#0000ff;text-align:center;white-space:pre;">42</div>
<div style="position:absolute;left:796.6px;top:251px;width:59px;font-size:11px;line-height:20px;font-weight:400;color:#0000ff;text-align:center;white-space:pre;">52</div>
<div style="position:absolute;left:856.6px;top:251px;width:59px;font-size:11px;line-height:20px;font-weight:400;color:#0000ff;text-align:center;white-space:pre;">9</div>
<div style="position:absolute;left:916.6px;top:251px;width:59px;font-size:11px;line-height:20px;font-weight:400;color:#0000ff;text-align:center;white-space:pre;">44</div>
<div style="position:absolute;left:19px;top:268px;font-size:11.6px;line-height:20px;font-weight:700;color:#000;text-align:left;white-space:pre;letter-spacing:0.2px;-webkit-text-stroke:0.25px #000;">kolovoz 2021</div>
<div style="position:absolute;left:117px;top:268px;width:54px;font-size:11px;line-height:20px;font-weight:700;color:#000;text-align:center;white-space:pre;letter-spacing:0.6px;-webkit-text-stroke:0.25px #000;">4</div>
<div style="position:absolute;left:171.6px;top:268px;width:54px;font-size:11px;line-height:20px;font-weight:400;color:#000;text-align:center;white-space:pre;">0</div>
<div style="position:absolute;left:226.6px;top:268px;width:54px;font-size:11px;line-height:20px;font-weight:400;color:#000;text-align:center;white-space:pre;">4</div>
<div style="position:absolute;left:282px;top:268px;width:54px;font-size:11px;line-height:20px;font-weight:700;color:#000;text-align:center;white-space:pre;letter-spacing:0.6px;-webkit-text-stroke:0.25px #000;">6</div>
<div style="position:absolute;left:336.6px;top:268px;width:54px;font-size:11px;line-height:20px;font-weight:400;color:#000;text-align:center;white-space:pre;">1</div>
<div style="position:absolute;left:391.6px;top:268px;width:54px;font-size:11px;line-height:20px;font-weight:400;color:#000;text-align:center;white-space:pre;">5</div>
<div style="position:absolute;left:447px;top:268px;width:49.6px;font-size:11px;line-height:20px;font-weight:700;color:#000;text-align:right;white-space:pre;letter-spacing:0.6px;-webkit-text-stroke:0.25px #000;">49,74</div>
<div style="position:absolute;left:507px;top:268px;width:44px;font-size:11px;line-height:20px;font-weight:400;color:#000;text-align:right;white-space:pre;">8,39</div>
<div style="position:absolute;left:562px;top:268px;width:44px;font-size:11px;line-height:20px;font-weight:400;color:#000;text-align:right;white-space:pre;">41,35</div>
<div style="position:absolute;left:616.6px;top:268px;width:59px;font-size:11px;line-height:20px;font-weight:400;color:#0000ff;text-align:center;white-space:pre;">48</div>
<div style="position:absolute;left:676.6px;top:268px;width:59px;font-size:11px;line-height:20px;font-weight:400;color:#0000ff;text-align:center;white-space:pre;">8</div>
<div style="position:absolute;left:736.6px;top:268px;width:59px;font-size:11px;line-height:20px;font-weight:400;color:#0000ff;text-align:center;white-space:pre;">40</div>
<div style="position:absolute;left:796.6px;top:268px;width:59px;font-size:11px;line-height:20px;font-weight:400;color:#0000ff;text-align:center;white-space:pre;">52</div>
<div style="position:absolute;left:856.6px;top:268px;width:59px;font-size:11px;line-height:20px;font-weight:400;color:#0000ff;text-align:center;white-space:pre;">9</div>
<div style="position:absolute;left:916.6px;top:268px;width:59px;font-size:11px;line-height:20px;font-weight:400;color:#0000ff;text-align:center;white-space:pre;">43</div>
<div style="position:absolute;left:19px;top:285px;font-size:11.6px;line-height:20px;font-weight:700;color:#000;text-align:left;white-space:pre;letter-spacing:0.2px;-webkit-text-stroke:0.25px #000;">rujan 2021</div>
<div style="position:absolute;left:117px;top:285px;width:54px;font-size:11px;line-height:20px;font-weight:700;color:#000;text-align:center;white-space:pre;letter-spacing:0.6px;-webkit-text-stroke:0.25px #000;">5</div>
<div style="position:absolute;left:171.6px;top:285px;width:54px;font-size:11px;line-height:20px;font-weight:400;color:#000;text-align:center;white-space:pre;">2</div>
<div style="position:absolute;left:226.6px;top:285px;width:54px;font-size:11px;line-height:20px;font-weight:400;color:#000;text-align:center;white-space:pre;">3</div>
<div style="position:absolute;left:282px;top:285px;width:54px;font-size:11px;line-height:20px;font-weight:700;color:#000;text-align:center;white-space:pre;letter-spacing:0.6px;-webkit-text-stroke:0.25px #000;">3</div>
<div style="position:absolute;left:336.6px;top:285px;width:54px;font-size:11px;line-height:20px;font-weight:400;color:#000;text-align:center;white-space:pre;">1</div>
<div style="position:absolute;left:391.6px;top:285px;width:54px;font-size:11px;line-height:20px;font-weight:400;color:#000;text-align:center;white-space:pre;">2</div>
<div style="position:absolute;left:447px;top:285px;width:49.6px;font-size:11px;line-height:20px;font-weight:700;color:#000;text-align:right;white-space:pre;letter-spacing:0.6px;-webkit-text-stroke:0.25px #000;">50,4</div>
<div style="position:absolute;left:507px;top:285px;width:44px;font-size:11px;line-height:20px;font-weight:400;color:#000;text-align:right;white-space:pre;">8,7</div>
<div style="position:absolute;left:562px;top:285px;width:44px;font-size:11px;line-height:20px;font-weight:400;color:#000;text-align:right;white-space:pre;">41,7</div>
<div style="position:absolute;left:616.6px;top:285px;width:59px;font-size:11px;line-height:20px;font-weight:400;color:#0000ff;text-align:center;white-space:pre;">49</div>
<div style="position:absolute;left:676.6px;top:285px;width:59px;font-size:11px;line-height:20px;font-weight:400;color:#0000ff;text-align:center;white-space:pre;">8</div>
<div style="position:absolute;left:736.6px;top:285px;width:59px;font-size:11px;line-height:20px;font-weight:400;color:#0000ff;text-align:center;white-space:pre;">40</div>
<div style="position:absolute;left:796.6px;top:285px;width:59px;font-size:11px;line-height:20px;font-weight:400;color:#0000ff;text-align:center;white-space:pre;">51</div>
<div style="position:absolute;left:856.6px;top:285px;width:59px;font-size:11px;line-height:20px;font-weight:400;color:#0000ff;text-align:center;white-space:pre;">9</div>
<div style="position:absolute;left:916.6px;top:285px;width:59px;font-size:11px;line-height:20px;font-weight:400;color:#0000ff;text-align:center;white-space:pre;">42</div>
<div style="position:absolute;left:19px;top:302px;font-size:11.6px;line-height:20px;font-weight:700;color:#000;text-align:left;white-space:pre;letter-spacing:0.2px;-webkit-text-stroke:0.25px #000;">listopad 2021</div>
<div style="position:absolute;left:117px;top:302px;width:54px;font-size:11px;line-height:20px;font-weight:700;color:#000;text-align:center;white-space:pre;letter-spacing:0.6px;-webkit-text-stroke:0.25px #000;">1</div>
<div style="position:absolute;left:171.6px;top:302px;width:54px;font-size:11px;line-height:20px;font-weight:400;color:#000;text-align:center;white-space:pre;">0</div>
<div style="position:absolute;left:226.6px;top:302px;width:54px;font-size:11px;line-height:20px;font-weight:400;color:#000;text-align:center;white-space:pre;">1</div>
<div style="position:absolute;left:282px;top:302px;width:54px;font-size:11px;line-height:20px;font-weight:700;color:#000;text-align:center;white-space:pre;letter-spacing:0.6px;-webkit-text-stroke:0.25px #000;">2</div>
<div style="position:absolute;left:336.6px;top:302px;width:54px;font-size:11px;line-height:20px;font-weight:400;color:#000;text-align:center;white-space:pre;">0</div>
<div style="position:absolute;left:391.6px;top:302px;width:54px;font-size:11px;line-height:20px;font-weight:400;color:#000;text-align:center;white-space:pre;">2</div>
<div style="position:absolute;left:447px;top:302px;width:49.6px;font-size:11px;line-height:20px;font-weight:700;color:#000;text-align:right;white-space:pre;letter-spacing:0.6px;-webkit-text-stroke:0.25px #000;">50,52</div>
<div style="position:absolute;left:507px;top:302px;width:44px;font-size:11px;line-height:20px;font-weight:400;color:#000;text-align:right;white-space:pre;">9</div>
<div style="position:absolute;left:562px;top:302px;width:44px;font-size:11px;line-height:20px;font-weight:400;color:#000;text-align:right;white-space:pre;">41,52</div>
<div style="position:absolute;left:616.6px;top:302px;width:59px;font-size:11px;line-height:20px;font-weight:400;color:#0000ff;text-align:center;white-space:pre;">50</div>
<div style="position:absolute;left:676.6px;top:302px;width:59px;font-size:11px;line-height:20px;font-weight:400;color:#0000ff;text-align:center;white-space:pre;">9</div>
<div style="position:absolute;left:736.6px;top:302px;width:59px;font-size:11px;line-height:20px;font-weight:400;color:#0000ff;text-align:center;white-space:pre;">41</div>
<div style="position:absolute;left:796.6px;top:302px;width:59px;font-size:11px;line-height:20px;font-weight:400;color:#0000ff;text-align:center;white-space:pre;">51</div>
<div style="position:absolute;left:856.6px;top:302px;width:59px;font-size:11px;line-height:20px;font-weight:400;color:#0000ff;text-align:center;white-space:pre;">9</div>
<div style="position:absolute;left:916.6px;top:302px;width:59px;font-size:11px;line-height:20px;font-weight:400;color:#0000ff;text-align:center;white-space:pre;">42</div>
<div style="position:absolute;left:19px;top:319px;font-size:11.6px;line-height:20px;font-weight:700;color:#000;text-align:left;white-space:pre;letter-spacing:0.2px;-webkit-text-stroke:0.25px #000;">studeni 2021</div>
<div style="position:absolute;left:117px;top:319px;width:54px;font-size:11px;line-height:20px;font-weight:700;color:#000;text-align:center;white-space:pre;letter-spacing:0.6px;-webkit-text-stroke:0.25px #000;">1</div>
<div style="position:absolute;left:171.6px;top:319px;width:54px;font-size:11px;line-height:20px;font-weight:400;color:#000;text-align:center;white-space:pre;">0</div>
<div style="position:absolute;left:226.6px;top:319px;width:54px;font-size:11px;line-height:20px;font-weight:400;color:#000;text-align:center;white-space:pre;">1</div>
<div style="position:absolute;left:282px;top:319px;width:54px;font-size:11px;line-height:20px;font-weight:700;color:#000;text-align:center;white-space:pre;letter-spacing:0.6px;-webkit-text-stroke:0.25px #000;">0</div>
<div style="position:absolute;left:336.6px;top:319px;width:54px;font-size:11px;line-height:20px;font-weight:400;color:#000;text-align:center;white-space:pre;">0</div>
<div style="position:absolute;left:391.6px;top:319px;width:54px;font-size:11px;line-height:20px;font-weight:400;color:#000;text-align:center;white-space:pre;">0</div>
<div style="position:absolute;left:447px;top:319px;width:49.6px;font-size:11px;line-height:20px;font-weight:700;color:#000;text-align:right;white-space:pre;letter-spacing:0.6px;-webkit-text-stroke:0.25px #000;">50,63</div>
<div style="position:absolute;left:507px;top:319px;width:44px;font-size:11px;line-height:20px;font-weight:400;color:#000;text-align:right;white-space:pre;">9</div>
<div style="position:absolute;left:562px;top:319px;width:44px;font-size:11px;line-height:20px;font-weight:400;color:#000;text-align:right;white-space:pre;">41,63</div>
<div style="position:absolute;left:616.6px;top:319px;width:59px;font-size:11px;line-height:20px;font-weight:400;color:#0000ff;text-align:center;white-space:pre;">50</div>
<div style="position:absolute;left:676.6px;top:319px;width:59px;font-size:11px;line-height:20px;font-weight:400;color:#0000ff;text-align:center;white-space:pre;">9</div>
<div style="position:absolute;left:736.6px;top:319px;width:59px;font-size:11px;line-height:20px;font-weight:400;color:#0000ff;text-align:center;white-space:pre;">41</div>
<div style="position:absolute;left:796.6px;top:319px;width:59px;font-size:11px;line-height:20px;font-weight:400;color:#0000ff;text-align:center;white-space:pre;">51</div>
<div style="position:absolute;left:856.6px;top:319px;width:59px;font-size:11px;line-height:20px;font-weight:400;color:#0000ff;text-align:center;white-space:pre;">9</div>
<div style="position:absolute;left:916.6px;top:319px;width:59px;font-size:11px;line-height:20px;font-weight:400;color:#0000ff;text-align:center;white-space:pre;">42</div>
<div style="position:absolute;left:19px;top:336px;font-size:11.6px;line-height:20px;font-weight:700;color:#000;text-align:left;white-space:pre;letter-spacing:0.2px;-webkit-text-stroke:0.25px #000;">prosinac 2021</div>
<div style="position:absolute;left:117px;top:336px;width:54px;font-size:11px;line-height:20px;font-weight:700;color:#000;text-align:center;white-space:pre;letter-spacing:0.6px;-webkit-text-stroke:0.25px #000;">2</div>
<div style="position:absolute;left:171.6px;top:336px;width:54px;font-size:11px;line-height:20px;font-weight:400;color:#000;text-align:center;white-space:pre;">1</div>
<div style="position:absolute;left:226.6px;top:336px;width:54px;font-size:11px;line-height:20px;font-weight:400;color:#000;text-align:center;white-space:pre;">1</div>
<div style="position:absolute;left:282px;top:336px;width:54px;font-size:11px;line-height:20px;font-weight:700;color:#000;text-align:center;white-space:pre;letter-spacing:0.6px;-webkit-text-stroke:0.25px #000;">4</div>
<div style="position:absolute;left:336.6px;top:336px;width:54px;font-size:11px;line-height:20px;font-weight:400;color:#000;text-align:center;white-space:pre;">1</div>
<div style="position:absolute;left:391.6px;top:336px;width:54px;font-size:11px;line-height:20px;font-weight:400;color:#000;text-align:center;white-space:pre;">3</div>
<div style="position:absolute;left:447px;top:336px;width:49.6px;font-size:11px;line-height:20px;font-weight:700;color:#000;text-align:right;white-space:pre;letter-spacing:0.6px;-webkit-text-stroke:0.25px #000;">50,65</div>
<div style="position:absolute;left:507px;top:336px;width:44px;font-size:11px;line-height:20px;font-weight:400;color:#000;text-align:right;white-space:pre;">9,94</div>
<div style="position:absolute;left:562px;top:336px;width:44px;font-size:11px;line-height:20px;font-weight:400;color:#000;text-align:right;white-space:pre;">40,71</div>
<div style="position:absolute;left:616.6px;top:336px;width:59px;font-size:11px;line-height:20px;font-weight:400;color:#0000ff;text-align:center;white-space:pre;">50</div>
<div style="position:absolute;left:676.6px;top:336px;width:59px;font-size:11px;line-height:20px;font-weight:400;color:#0000ff;text-align:center;white-space:pre;">9</div>
<div style="position:absolute;left:736.6px;top:336px;width:59px;font-size:11px;line-height:20px;font-weight:400;color:#0000ff;text-align:center;white-space:pre;">40</div>
<div style="position:absolute;left:796.6px;top:336px;width:59px;font-size:11px;line-height:20px;font-weight:400;color:#0000ff;text-align:center;white-space:pre;">52</div>
<div style="position:absolute;left:856.6px;top:336px;width:59px;font-size:11px;line-height:20px;font-weight:400;color:#0000ff;text-align:center;white-space:pre;">10</div>
<div style="position:absolute;left:916.6px;top:336px;width:59px;font-size:11px;line-height:20px;font-weight:400;color:#0000ff;text-align:center;white-space:pre;">42</div>
<div style="position:absolute;left:19px;top:353px;font-size:11.6px;line-height:20px;font-weight:700;color:#000;text-align:left;white-space:pre;letter-spacing:0.2px;-webkit-text-stroke:0.25px #000;">siječanj 2022</div>
<div style="position:absolute;left:117px;top:353px;width:54px;font-size:11px;line-height:20px;font-weight:700;color:#000;text-align:center;white-space:pre;letter-spacing:0.6px;-webkit-text-stroke:0.25px #000;">3</div>
<div style="position:absolute;left:171.6px;top:353px;width:54px;font-size:11px;line-height:20px;font-weight:400;color:#000;text-align:center;white-space:pre;">1</div>
<div style="position:absolute;left:226.6px;top:353px;width:54px;font-size:11px;line-height:20px;font-weight:400;color:#000;text-align:center;white-space:pre;">2</div>
<div style="position:absolute;left:282px;top:353px;width:54px;font-size:11px;line-height:20px;font-weight:700;color:#000;text-align:center;white-space:pre;letter-spacing:0.6px;-webkit-text-stroke:0.25px #000;">1</div>
<div style="position:absolute;left:336.6px;top:353px;width:54px;font-size:11px;line-height:20px;font-weight:400;color:#000;text-align:center;white-space:pre;">0</div>
<div style="position:absolute;left:391.6px;top:353px;width:54px;font-size:11px;line-height:20px;font-weight:400;color:#000;text-align:center;white-space:pre;">1</div>
<div style="position:absolute;left:447px;top:353px;width:49.6px;font-size:11px;line-height:20px;font-weight:700;color:#000;text-align:right;white-space:pre;letter-spacing:0.6px;-webkit-text-stroke:0.25px #000;">49,1</div>
<div style="position:absolute;left:507px;top:353px;width:44px;font-size:11px;line-height:20px;font-weight:400;color:#000;text-align:right;white-space:pre;">9,26</div>
<div style="position:absolute;left:562px;top:353px;width:44px;font-size:11px;line-height:20px;font-weight:400;color:#000;text-align:right;white-space:pre;">39,84</div>
<div style="position:absolute;left:616.6px;top:353px;width:59px;font-size:11px;line-height:20px;font-weight:400;color:#0000ff;text-align:center;white-space:pre;">48</div>
<div style="position:absolute;left:676.6px;top:353px;width:59px;font-size:11px;line-height:20px;font-weight:400;color:#0000ff;text-align:center;white-space:pre;">9</div>
<div style="position:absolute;left:736.6px;top:353px;width:59px;font-size:11px;line-height:20px;font-weight:400;color:#0000ff;text-align:center;white-space:pre;">39</div>
<div style="position:absolute;left:796.6px;top:353px;width:59px;font-size:11px;line-height:20px;font-weight:400;color:#0000ff;text-align:center;white-space:pre;">51</div>
<div style="position:absolute;left:856.6px;top:353px;width:59px;font-size:11px;line-height:20px;font-weight:400;color:#0000ff;text-align:center;white-space:pre;">10</div>
<div style="position:absolute;left:916.6px;top:353px;width:59px;font-size:11px;line-height:20px;font-weight:400;color:#0000ff;text-align:center;white-space:pre;">41</div>
<div style="position:absolute;left:19px;top:370px;font-size:11.6px;line-height:20px;font-weight:700;color:#000;text-align:left;white-space:pre;letter-spacing:0.2px;-webkit-text-stroke:0.25px #000;">veljača 2022</div>
<div style="position:absolute;left:117px;top:370px;width:54px;font-size:11px;line-height:20px;font-weight:700;color:#000;text-align:center;white-space:pre;letter-spacing:0.6px;-webkit-text-stroke:0.25px #000;">1</div>
<div style="position:absolute;left:171.6px;top:370px;width:54px;font-size:11px;line-height:20px;font-weight:400;color:#000;text-align:center;white-space:pre;">0</div>
<div style="position:absolute;left:226.6px;top:370px;width:54px;font-size:11px;line-height:20px;font-weight:400;color:#000;text-align:center;white-space:pre;">1</div>
<div style="position:absolute;left:282px;top:370px;width:54px;font-size:11px;line-height:20px;font-weight:700;color:#000;text-align:center;white-space:pre;letter-spacing:0.6px;-webkit-text-stroke:0.25px #000;">2</div>
<div style="position:absolute;left:336.6px;top:370px;width:54px;font-size:11px;line-height:20px;font-weight:400;color:#000;text-align:center;white-space:pre;">2</div>
<div style="position:absolute;left:391.6px;top:370px;width:54px;font-size:11px;line-height:20px;font-weight:400;color:#000;text-align:center;white-space:pre;">0</div>
<div style="position:absolute;left:447px;top:370px;width:49.6px;font-size:11px;line-height:20px;font-weight:700;color:#000;text-align:right;white-space:pre;letter-spacing:0.6px;-webkit-text-stroke:0.25px #000;">49,5</div>
<div style="position:absolute;left:507px;top:370px;width:44px;font-size:11px;line-height:20px;font-weight:400;color:#000;text-align:right;white-space:pre;">8,46</div>
<div style="position:absolute;left:562px;top:370px;width:44px;font-size:11px;line-height:20px;font-weight:400;color:#000;text-align:right;white-space:pre;">41,04</div>
<div style="position:absolute;left:616.6px;top:370px;width:59px;font-size:11px;line-height:20px;font-weight:400;color:#0000ff;text-align:center;white-space:pre;">49</div>
<div style="position:absolute;left:676.6px;top:370px;width:59px;font-size:11px;line-height:20px;font-weight:400;color:#0000ff;text-align:center;white-space:pre;">8</div>
<div style="position:absolute;left:736.6px;top:370px;width:59px;font-size:11px;line-height:20px;font-weight:400;color:#0000ff;text-align:center;white-space:pre;">41</div>
<div style="position:absolute;left:796.6px;top:370px;width:59px;font-size:11px;line-height:20px;font-weight:400;color:#0000ff;text-align:center;white-space:pre;">51</div>
<div style="position:absolute;left:856.6px;top:370px;width:59px;font-size:11px;line-height:20px;font-weight:400;color:#0000ff;text-align:center;white-space:pre;">10</div>
<div style="position:absolute;left:916.6px;top:370px;width:59px;font-size:11px;line-height:20px;font-weight:400;color:#0000ff;text-align:center;white-space:pre;">42</div>
<div style="position:absolute;left:19px;top:387px;font-size:11.6px;line-height:20px;font-weight:700;color:#000;text-align:left;white-space:pre;letter-spacing:0.2px;-webkit-text-stroke:0.25px #000;">ožujak 2022</div>
<div style="position:absolute;left:117px;top:387px;width:54px;font-size:11px;line-height:20px;font-weight:700;color:#000;text-align:center;white-space:pre;letter-spacing:0.6px;-webkit-text-stroke:0.25px #000;">3</div>
<div style="position:absolute;left:171.6px;top:387px;width:54px;font-size:11px;line-height:20px;font-weight:400;color:#000;text-align:center;white-space:pre;">0</div>
<div style="position:absolute;left:226.6px;top:387px;width:54px;font-size:11px;line-height:20px;font-weight:400;color:#000;text-align:center;white-space:pre;">3</div>
<div style="position:absolute;left:282px;top:387px;width:54px;font-size:11px;line-height:20px;font-weight:700;color:#000;text-align:center;white-space:pre;letter-spacing:0.6px;-webkit-text-stroke:0.25px #000;">4</div>
<div style="position:absolute;left:336.6px;top:387px;width:54px;font-size:11px;line-height:20px;font-weight:400;color:#000;text-align:center;white-space:pre;">2</div>
<div style="position:absolute;left:391.6px;top:387px;width:54px;font-size:11px;line-height:20px;font-weight:400;color:#000;text-align:center;white-space:pre;">2</div>
<div style="position:absolute;left:447px;top:387px;width:49.6px;font-size:11px;line-height:20px;font-weight:700;color:#000;text-align:right;white-space:pre;letter-spacing:0.6px;-webkit-text-stroke:0.25px #000;">49,65</div>
<div style="position:absolute;left:507px;top:387px;width:44px;font-size:11px;line-height:20px;font-weight:400;color:#000;text-align:right;white-space:pre;">7</div>
<div style="position:absolute;left:562px;top:387px;width:44px;font-size:11px;line-height:20px;font-weight:400;color:#000;text-align:right;white-space:pre;">42,65</div>
<div style="position:absolute;left:616.6px;top:387px;width:59px;font-size:11px;line-height:20px;font-weight:400;color:#0000ff;text-align:center;white-space:pre;">49</div>
<div style="position:absolute;left:676.6px;top:387px;width:59px;font-size:11px;line-height:20px;font-weight:400;color:#0000ff;text-align:center;white-space:pre;">6</div>
<div style="position:absolute;left:736.6px;top:387px;width:59px;font-size:11px;line-height:20px;font-weight:400;color:#0000ff;text-align:center;white-space:pre;">42</div>
<div style="position:absolute;left:796.6px;top:387px;width:59px;font-size:11px;line-height:20px;font-weight:400;color:#0000ff;text-align:center;white-space:pre;">52</div>
<div style="position:absolute;left:856.6px;top:387px;width:59px;font-size:11px;line-height:20px;font-weight:400;color:#0000ff;text-align:center;white-space:pre;">8</div>
<div style="position:absolute;left:916.6px;top:387px;width:59px;font-size:11px;line-height:20px;font-weight:400;color:#0000ff;text-align:center;white-space:pre;">44</div>
<div style="position:absolute;left:19px;top:404px;font-size:11.6px;line-height:20px;font-weight:700;color:#000;text-align:left;white-space:pre;letter-spacing:0.2px;-webkit-text-stroke:0.25px #000;">travanj 2022</div>
<div style="position:absolute;left:117px;top:404px;width:54px;font-size:11px;line-height:20px;font-weight:700;color:#000;text-align:center;white-space:pre;letter-spacing:0.6px;-webkit-text-stroke:0.25px #000;">6</div>
<div style="position:absolute;left:171.6px;top:404px;width:54px;font-size:11px;line-height:20px;font-weight:400;color:#000;text-align:center;white-space:pre;">1</div>
<div style="position:absolute;left:226.6px;top:404px;width:54px;font-size:11px;line-height:20px;font-weight:400;color:#000;text-align:center;white-space:pre;">5</div>
<div style="position:absolute;left:282px;top:404px;width:54px;font-size:11px;line-height:20px;font-weight:700;color:#000;text-align:center;white-space:pre;letter-spacing:0.6px;-webkit-text-stroke:0.25px #000;">4</div>
<div style="position:absolute;left:336.6px;top:404px;width:54px;font-size:11px;line-height:20px;font-weight:400;color:#000;text-align:center;white-space:pre;">0</div>
<div style="position:absolute;left:391.6px;top:404px;width:54px;font-size:11px;line-height:20px;font-weight:400;color:#000;text-align:center;white-space:pre;">4</div>
<div style="position:absolute;left:447px;top:404px;width:49.6px;font-size:11px;line-height:20px;font-weight:700;color:#000;text-align:right;white-space:pre;letter-spacing:0.6px;-webkit-text-stroke:0.25px #000;">49,57</div>
<div style="position:absolute;left:507px;top:404px;width:44px;font-size:11px;line-height:20px;font-weight:400;color:#000;text-align:right;white-space:pre;">6,37</div>
<div style="position:absolute;left:562px;top:404px;width:44px;font-size:11px;line-height:20px;font-weight:400;color:#000;text-align:right;white-space:pre;">43,2</div>
<div style="position:absolute;left:616.6px;top:404px;width:59px;font-size:11px;line-height:20px;font-weight:400;color:#0000ff;text-align:center;white-space:pre;">48</div>
<div style="position:absolute;left:676.6px;top:404px;width:59px;font-size:11px;line-height:20px;font-weight:400;color:#0000ff;text-align:center;white-space:pre;">6</div>
<div style="position:absolute;left:736.6px;top:404px;width:59px;font-size:11px;line-height:20px;font-weight:400;color:#0000ff;text-align:center;white-space:pre;">42</div>
<div style="position:absolute;left:796.6px;top:404px;width:59px;font-size:11px;line-height:20px;font-weight:400;color:#0000ff;text-align:center;white-space:pre;">52</div>
<div style="position:absolute;left:856.6px;top:404px;width:59px;font-size:11px;line-height:20px;font-weight:400;color:#0000ff;text-align:center;white-space:pre;">7</div>
<div style="position:absolute;left:916.6px;top:404px;width:59px;font-size:11px;line-height:20px;font-weight:400;color:#0000ff;text-align:center;white-space:pre;">45</div>
<div style="position:absolute;left:19px;top:421px;font-size:11.6px;line-height:20px;font-weight:700;color:#000;text-align:left;white-space:pre;letter-spacing:0.2px;-webkit-text-stroke:0.25px #000;">svibanj 2022</div>
<div style="position:absolute;left:117px;top:421px;width:54px;font-size:11px;line-height:20px;font-weight:700;color:#000;text-align:center;white-space:pre;letter-spacing:0.6px;-webkit-text-stroke:0.25px #000;">2</div>
<div style="position:absolute;left:171.6px;top:421px;width:54px;font-size:11px;line-height:20px;font-weight:400;color:#000;text-align:center;white-space:pre;">0</div>
<div style="position:absolute;left:226.6px;top:421px;width:54px;font-size:11px;line-height:20px;font-weight:400;color:#000;text-align:center;white-space:pre;">2</div>
<div style="position:absolute;left:282px;top:421px;width:54px;font-size:11px;line-height:20px;font-weight:700;color:#000;text-align:center;white-space:pre;letter-spacing:0.6px;-webkit-text-stroke:0.25px #000;">2</div>
<div style="position:absolute;left:336.6px;top:421px;width:54px;font-size:11px;line-height:20px;font-weight:400;color:#000;text-align:center;white-space:pre;">0</div>
<div style="position:absolute;left:391.6px;top:421px;width:54px;font-size:11px;line-height:20px;font-weight:400;color:#000;text-align:center;white-space:pre;">2</div>
<div style="position:absolute;left:447px;top:421px;width:49.6px;font-size:11px;line-height:20px;font-weight:700;color:#000;text-align:right;white-space:pre;letter-spacing:0.6px;-webkit-text-stroke:0.25px #000;">50,45</div>
<div style="position:absolute;left:507px;top:421px;width:44px;font-size:11px;line-height:20px;font-weight:400;color:#000;text-align:right;white-space:pre;">7</div>
<div style="position:absolute;left:562px;top:421px;width:44px;font-size:11px;line-height:20px;font-weight:400;color:#000;text-align:right;white-space:pre;">43,45</div>
<div style="position:absolute;left:616.6px;top:421px;width:59px;font-size:11px;line-height:20px;font-weight:400;color:#0000ff;text-align:center;white-space:pre;">50</div>
<div style="position:absolute;left:676.6px;top:421px;width:59px;font-size:11px;line-height:20px;font-weight:400;color:#0000ff;text-align:center;white-space:pre;">7</div>
<div style="position:absolute;left:736.6px;top:421px;width:59px;font-size:11px;line-height:20px;font-weight:400;color:#0000ff;text-align:center;white-space:pre;">43</div>
<div style="position:absolute;left:796.6px;top:421px;width:59px;font-size:11px;line-height:20px;font-weight:400;color:#0000ff;text-align:center;white-space:pre;">51</div>
<div style="position:absolute;left:856.6px;top:421px;width:59px;font-size:11px;line-height:20px;font-weight:400;color:#0000ff;text-align:center;white-space:pre;">7</div>
<div style="position:absolute;left:916.6px;top:421px;width:59px;font-size:11px;line-height:20px;font-weight:400;color:#0000ff;text-align:center;white-space:pre;">44</div>
<div style="position:absolute;left:19px;top:438px;font-size:11.6px;line-height:20px;font-weight:700;color:#000;text-align:left;white-space:pre;letter-spacing:0.2px;-webkit-text-stroke:0.25px #000;">lipanj 2022</div>
<div style="position:absolute;left:117px;top:438px;width:54px;font-size:11px;line-height:20px;font-weight:700;color:#000;text-align:center;white-space:pre;letter-spacing:0.6px;-webkit-text-stroke:0.25px #000;">2</div>
<div style="position:absolute;left:171.6px;top:438px;width:54px;font-size:11px;line-height:20px;font-weight:400;color:#000;text-align:center;white-space:pre;">1</div>
<div style="position:absolute;left:226.6px;top:438px;width:54px;font-size:11px;line-height:20px;font-weight:400;color:#000;text-align:center;white-space:pre;">1</div>
<div style="position:absolute;left:282px;top:438px;width:54px;font-size:11px;line-height:20px;font-weight:700;color:#000;text-align:center;white-space:pre;letter-spacing:0.6px;-webkit-text-stroke:0.25px #000;">2</div>
<div style="position:absolute;left:336.6px;top:438px;width:54px;font-size:11px;line-height:20px;font-weight:400;color:#000;text-align:center;white-space:pre;">2</div>
<div style="position:absolute;left:391.6px;top:438px;width:54px;font-size:11px;line-height:20px;font-weight:400;color:#000;text-align:center;white-space:pre;">0</div>
<div style="position:absolute;left:447px;top:438px;width:49.6px;font-size:11px;line-height:20px;font-weight:700;color:#000;text-align:right;white-space:pre;letter-spacing:0.6px;-webkit-text-stroke:0.25px #000;">51,5</div>
<div style="position:absolute;left:507px;top:438px;width:44px;font-size:11px;line-height:20px;font-weight:400;color:#000;text-align:right;white-space:pre;">6,57</div>
<div style="position:absolute;left:562px;top:438px;width:44px;font-size:11px;line-height:20px;font-weight:400;color:#000;text-align:right;white-space:pre;">44,93</div>
<div style="position:absolute;left:616.6px;top:438px;width:59px;font-size:11px;line-height:20px;font-weight:400;color:#0000ff;text-align:center;white-space:pre;">51</div>
<div style="position:absolute;left:676.6px;top:438px;width:59px;font-size:11px;line-height:20px;font-weight:400;color:#0000ff;text-align:center;white-space:pre;">6</div>
<div style="position:absolute;left:736.6px;top:438px;width:59px;font-size:11px;line-height:20px;font-weight:400;color:#0000ff;text-align:center;white-space:pre;">44</div>
<div style="position:absolute;left:796.6px;top:438px;width:59px;font-size:11px;line-height:20px;font-weight:400;color:#0000ff;text-align:center;white-space:pre;">52</div>
<div style="position:absolute;left:856.6px;top:438px;width:59px;font-size:11px;line-height:20px;font-weight:400;color:#0000ff;text-align:center;white-space:pre;">7</div>
<div style="position:absolute;left:916.6px;top:438px;width:59px;font-size:11px;line-height:20px;font-weight:400;color:#0000ff;text-align:center;white-space:pre;">45</div>
<div style="position:absolute;left:19px;top:455px;font-size:11.6px;line-height:20px;font-weight:700;color:#000;text-align:left;white-space:pre;letter-spacing:0.2px;-webkit-text-stroke:0.25px #000;">srpanj 2022</div>
<div style="position:absolute;left:117px;top:455px;width:54px;font-size:11px;line-height:20px;font-weight:700;color:#000;text-align:center;white-space:pre;letter-spacing:0.6px;-webkit-text-stroke:0.25px #000;">4</div>
<div style="position:absolute;left:171.6px;top:455px;width:54px;font-size:11px;line-height:20px;font-weight:400;color:#000;text-align:center;white-space:pre;">1</div>
<div style="position:absolute;left:226.6px;top:455px;width:54px;font-size:11px;line-height:20px;font-weight:400;color:#000;text-align:center;white-space:pre;">3</div>
<div style="position:absolute;left:282px;top:455px;width:54px;font-size:11px;line-height:20px;font-weight:700;color:#000;text-align:center;white-space:pre;letter-spacing:0.6px;-webkit-text-stroke:0.25px #000;">5</div>
<div style="position:absolute;left:336.6px;top:455px;width:54px;font-size:11px;line-height:20px;font-weight:400;color:#000;text-align:center;white-space:pre;">0</div>
<div style="position:absolute;left:391.6px;top:455px;width:54px;font-size:11px;line-height:20px;font-weight:400;color:#000;text-align:center;white-space:pre;">5</div>
<div style="position:absolute;left:447px;top:455px;width:49.6px;font-size:11px;line-height:20px;font-weight:700;color:#000;text-align:right;white-space:pre;letter-spacing:0.6px;-webkit-text-stroke:0.25px #000;">50,68</div>
<div style="position:absolute;left:507px;top:455px;width:44px;font-size:11px;line-height:20px;font-weight:400;color:#000;text-align:right;white-space:pre;">6,16</div>
<div style="position:absolute;left:562px;top:455px;width:44px;font-size:11px;line-height:20px;font-weight:400;color:#000;text-align:right;white-space:pre;">44,52</div>
<div style="position:absolute;left:616.6px;top:455px;width:59px;font-size:11px;line-height:20px;font-weight:400;color:#0000ff;text-align:center;white-space:pre;">50</div>
<div style="position:absolute;left:676.6px;top:455px;width:59px;font-size:11px;line-height:20px;font-weight:400;color:#0000ff;text-align:center;white-space:pre;">6</div>
<div style="position:absolute;left:736.6px;top:455px;width:59px;font-size:11px;line-height:20px;font-weight:400;color:#0000ff;text-align:center;white-space:pre;">43</div>
<div style="position:absolute;left:796.6px;top:455px;width:59px;font-size:11px;line-height:20px;font-weight:400;color:#0000ff;text-align:center;white-space:pre;">51</div>
<div style="position:absolute;left:856.6px;top:455px;width:59px;font-size:11px;line-height:20px;font-weight:400;color:#0000ff;text-align:center;white-space:pre;">7</div>
<div style="position:absolute;left:916.6px;top:455px;width:59px;font-size:11px;line-height:20px;font-weight:400;color:#0000ff;text-align:center;white-space:pre;">45</div>
<div style="position:absolute;left:19px;top:472px;font-size:11.6px;line-height:20px;font-weight:700;color:#000;text-align:left;white-space:pre;letter-spacing:0.2px;-webkit-text-stroke:0.25px #000;">kolovoz 2022</div>
<div style="position:absolute;left:117px;top:472px;width:54px;font-size:11px;line-height:20px;font-weight:700;color:#000;text-align:center;white-space:pre;letter-spacing:0.6px;-webkit-text-stroke:0.25px #000;">6</div>
<div style="position:absolute;left:171.6px;top:472px;width:54px;font-size:11px;line-height:20px;font-weight:400;color:#000;text-align:center;white-space:pre;">2</div>
<div style="position:absolute;left:226.6px;top:472px;width:54px;font-size:11px;line-height:20px;font-weight:400;color:#000;text-align:center;white-space:pre;">4</div>
<div style="position:absolute;left:282px;top:472px;width:54px;font-size:11px;line-height:20px;font-weight:700;color:#000;text-align:center;white-space:pre;letter-spacing:0.6px;-webkit-text-stroke:0.25px #000;">5</div>
<div style="position:absolute;left:336.6px;top:472px;width:54px;font-size:11px;line-height:20px;font-weight:400;color:#000;text-align:center;white-space:pre;">1</div>
<div style="position:absolute;left:391.6px;top:472px;width:54px;font-size:11px;line-height:20px;font-weight:400;color:#000;text-align:center;white-space:pre;">4</div>
<div style="position:absolute;left:447px;top:472px;width:49.6px;font-size:11px;line-height:20px;font-weight:700;color:#000;text-align:right;white-space:pre;letter-spacing:0.6px;-webkit-text-stroke:0.25px #000;">50,42</div>
<div style="position:absolute;left:507px;top:472px;width:44px;font-size:11px;line-height:20px;font-weight:400;color:#000;text-align:right;white-space:pre;">7,74</div>
<div style="position:absolute;left:562px;top:472px;width:44px;font-size:11px;line-height:20px;font-weight:400;color:#000;text-align:right;white-space:pre;">42,68</div>
<div style="position:absolute;left:616.6px;top:472px;width:59px;font-size:11px;line-height:20px;font-weight:400;color:#0000ff;text-align:center;white-space:pre;">49</div>
<div style="position:absolute;left:676.6px;top:472px;width:59px;font-size:11px;line-height:20px;font-weight:400;color:#0000ff;text-align:center;white-space:pre;">7</div>
<div style="position:absolute;left:736.6px;top:472px;width:59px;font-size:11px;line-height:20px;font-weight:400;color:#0000ff;text-align:center;white-space:pre;">42</div>
<div style="position:absolute;left:796.6px;top:472px;width:59px;font-size:11px;line-height:20px;font-weight:400;color:#0000ff;text-align:center;white-space:pre;">52</div>
<div style="position:absolute;left:856.6px;top:472px;width:59px;font-size:11px;line-height:20px;font-weight:400;color:#0000ff;text-align:center;white-space:pre;">8</div>
<div style="position:absolute;left:916.6px;top:472px;width:59px;font-size:11px;line-height:20px;font-weight:400;color:#0000ff;text-align:center;white-space:pre;">44</div>
<div style="position:absolute;left:974px;top:128px;width:16px;height:366px;background:#f0f0f0;"></div>
<div style="position:absolute;left:974px;top:145px;width:15px;height:235px;background:#cdcdcd;"></div>
<svg style="position:absolute;left:977px;top:133px" width="10" height="8" viewBox="0 0 10 8"><path d="M1.3 6 L4.8 2.5 L8.3 6" stroke="#606060" stroke-width="2" fill="none"/></svg>
<svg style="position:absolute;left:977px;top:481px" width="10" height="8" viewBox="0 0 10 8"><path d="M1.3 2 L4.8 5.5 L8.3 2" stroke="#606060" stroke-width="2" fill="none"/></svg>
<div style="position:absolute;left:17px;top:494px;width:973px;height:15px;background:#f0f0f0;"></div>
<div style="position:absolute;left:952px;top:494px;width:38px;height:16px;background:#f0f0f0;"></div>
<div style="position:absolute;left:34px;top:494px;width:918px;height:15px;background:#cdcdcd;"></div>
<svg style="position:absolute;left:21px;top:497px" width="8" height="10" viewBox="0 0 8 10"><path d="M6 1.5 L2.5 5 L6 8.5" stroke="#606060" stroke-width="2" fill="none"/></svg>
<svg style="position:absolute;left:961px;top:497px" width="8" height="10" viewBox="0 0 8 10"><path d="M2 1.5 L5.5 5 L2 8.5" stroke="#606060" stroke-width="2" fill="none"/></svg>
<svg style="position:absolute;left:0;top:0" width="1007" height="722" viewBox="0 0 1007 722"><line x1="73" x2="841" y1="679.30" y2="679.30" stroke="#dadada" stroke-width="1.6"/><line x1="73" x2="841" y1="664.90" y2="664.90" stroke="#dadada" stroke-width="1.6"/><line x1="73" x2="841" y1="650.50" y2="650.50" stroke="#dadada" stroke-width="1.6"/><line x1="73" x2="841" y1="636.10" y2="636.10" stroke="#dadada" stroke-width="1.6"/><line x1="73" x2="841" y1="621.70" y2="621.70" stroke="#dadada" stroke-width="1.6"/><line x1="73" x2="841" y1="607.30" y2="607.30" stroke="#dadada" stroke-width="1.6"/><line x1="73" x2="841" y1="592.90" y2="592.90" stroke="#dadada" stroke-width="1.6"/><line x1="73" x2="841" y1="578.50" y2="578.50" stroke="#dadada" stroke-width="1.6"/><line x1="73" x2="841" y1="564.10" y2="564.10" stroke="#dadada" stroke-width="1.6"/><line x1="73" x2="841" y1="549.70" y2="549.70" stroke="#dadada" stroke-width="1.6"/><line x1="73" x2="841" y1="535.30" y2="535.30" stroke="#dadada" stroke-width="1.6"/><line x1="73" x2="841" y1="520.90" y2="520.90" stroke="#dadada" stroke-width="1.6"/><line x1="91.25" x2="91.25" y1="517.5" y2="679" stroke="#d6d6d6" stroke-width="1.3"/><line x1="167.00" x2="167.00" y1="517.5" y2="679" stroke="#d6d6d6" stroke-width="1.3"/><line x1="242.75" x2="242.75" y1="517.5" y2="679" stroke="#d6d6d6" stroke-width="1.3"/><line x1="318.50" x2="318.50" y1="517.5" y2="679" stroke="#d6d6d6" stroke-width="1.3"/><line x1="394.25" x2="394.25" y1="517.5" y2="679" stroke="#d6d6d6" stroke-width="1.3"/><line x1="470.00" x2="470.00" y1="517.5" y2="679" stroke="#d6d6d6" stroke-width="1.3"/><line x1="545.75" x2="545.75" y1="517.5" y2="679" stroke="#d6d6d6" stroke-width="1.3"/><line x1="621.50" x2="621.50" y1="517.5" y2="679" stroke="#d6d6d6" stroke-width="1.3"/><line x1="697.25" x2="697.25" y1="517.5" y2="679" stroke="#d6d6d6" stroke-width="1.3"/><line x1="773.00" x2="773.00" y1="517.5" y2="679" stroke="#d6d6d6" stroke-width="1.3"/><line x1="66.5" x2="71" y1="679.30" y2="679.30" stroke="#9a9a9a" stroke-width="1.3"/><line x1="68.5" x2="71" y1="676.42" y2="676.42" stroke="#c4c4c4" stroke-width="0.8"/><line x1="68.5" x2="71" y1="673.54" y2="673.54" stroke="#c4c4c4" stroke-width="0.8"/><line x1="68.5" x2="71" y1="670.66" y2="670.66" stroke="#c4c4c4" stroke-width="0.8"/><line x1="68.5" x2="71" y1="667.78" y2="667.78" stroke="#c4c4c4" stroke-width="0.8"/><line x1="66.5" x2="71" y1="664.90" y2="664.90" stroke="#9a9a9a" stroke-width="1.3"/><line x1="68.5" x2="71" y1="662.02" y2="662.02" stroke="#c4c4c4" stroke-width="0.8"/><line x1="68.5" x2="71" y1="659.14" y2="659.14" stroke="#c4c4c4" stroke-width="0.8"/><line x1="68.5" x2="71" y1="656.26" y2="656.26" stroke="#c4c4c4" stroke-width="0.8"/><line x1="68.5" x2="71" y1="653.38" y2="653.38" stroke="#c4c4c4" stroke-width="0.8"/><line x1="66.5" x2="71" y1="650.50" y2="650.50" stroke="#9a9a9a" stroke-width="1.3"/><line x1="68.5" x2="71" y1="647.62" y2="647.62" stroke="#c4c4c4" stroke-width="0.8"/><line x1="68.5" x2="71" y1="644.74" y2="644.74" stroke="#c4c4c4" stroke-width="0.8"/><line x1="68.5" x2="71" y1="641.86" y2="641.86" stroke="#c4c4c4" stroke-width="0.8"/><line x1="68.5" x2="71" y1="638.98" y2="638.98" stroke="#c4c4c4" stroke-width="0.8"/><line x1="66.5" x2="71" y1="636.10" y2="636.10" stroke="#9a9a9a" stroke-width="1.3"/><line x1="68.5" x2="71" y1="633.22" y2="633.22" stroke="#c4c4c4" stroke-width="0.8"/><line x1="68.5" x2="71" y1="630.34" y2="630.34" stroke="#c4c4c4" stroke-width="0.8"/><line x1="68.5" x2="71" y1="627.46" y2="627.46" stroke="#c4c4c4" stroke-width="0.8"/><line x1="68.5" x2="71" y1="624.58" y2="624.58" stroke="#c4c4c4" stroke-width="0.8"/><line x1="66.5" x2="71" y1="621.70" y2="621.70" stroke="#9a9a9a" stroke-width="1.3"/><line x1="68.5" x2="71" y1="618.82" y2="618.82" stroke="#c4c4c4" stroke-width="0.8"/><line x1="68.5" x2="71" y1="615.94" y2="615.94" stroke="#c4c4c4" stroke-width="0.8"/><line x1="68.5" x2="71" y1="613.06" y2="613.06" stroke="#c4c4c4" stroke-width="0.8"/><line x1="68.5" x2="71" y1="610.18" y2="610.18" stroke="#c4c4c4" stroke-width="0.8"/><line x1="66.5" x2="71" y1="607.30" y2="607.30" stroke="#9a9a9a" stroke-width="1.3"/><line x1="68.5" x2="71" y1="604.42" y2="604.42" stroke="#c4c4c4" stroke-width="0.8"/><line x1="68.5" x2="71" y1="601.54" y2="601.54" stroke="#c4c4c4" stroke-width="0.8"/><line x1="68.5" x2="71" y1="598.66" y2="598.66" stroke="#c4c4c4" stroke-width="0.8"/><line x1="68.5" x2="71" y1="595.78" y2="595.78" stroke="#c4c4c4" stroke-width="0.8"/><line x1="66.5" x2="71" y1="592.90" y2="592.90" stroke="#9a9a9a" stroke-width="1.3"/><line x1="68.5" x2="71" y1="590.02" y2="590.02" stroke="#c4c4c4" stroke-width="0.8"/><line x1="68.5" x2="71" y1="587.14" y2="587.14" stroke="#c4c4c4" stroke-width="0.8"/><line x1="68.5" x2="71" y1="584.26" y2="584.26" stroke="#c4c4c4" stroke-width="0.8"/><line x1="68.5" x2="71" y1="581.38" y2="581.38" stroke="#c4c4c4" stroke-width="0.8"/><line x1="66.5" x2="71" y1="578.50" y2="578.50" stroke="#9a9a9a" stroke-width="1.3"/><line x1="68.5" x2="71" y1="575.62" y2="575.62" stroke="#c4c4c4" stroke-width="0.8"/><line x1="68.5" x2="71" y1="572.74" y2="572.74" stroke="#c4c4c4" stroke-width="0.8"/><line x1="68.5" x2="71" y1="569.86" y2="569.86" stroke="#c4c4c4" stroke-width="0.8"/><line x1="68.5" x2="71" y1="566.98" y2="566.98" stroke="#c4c4c4" stroke-width="0.8"/><line x1="66.5" x2="71" y1="564.10" y2="564.10" stroke="#9a9a9a" stroke-width="1.3"/><line x1="68.5" x2="71" y1="561.22" y2="561.22" stroke="#c4c4c4" stroke-width="0.8"/><line x1="68.5" x2="71" y1="558.34" y2="558.34" stroke="#c4c4c4" stroke-width="0.8"/><line x1="68.5" x2="71" y1="555.46" y2="555.46" stroke="#c4c4c4" stroke-width="0.8"/><line x1="68.5" x2="71" y1="552.58" y2="552.58" stroke="#c4c4c4" stroke-width="0.8"/><line x1="66.5" x2="71" y1="549.70" y2="549.70" stroke="#9a9a9a" stroke-width="1.3"/><line x1="68.5" x2="71" y1="546.82" y2="546.82" stroke="#c4c4c4" stroke-width="0.8"/><line x1="68.5" x2="71" y1="543.94" y2="543.94" stroke="#c4c4c4" stroke-width="0.8"/><line x1="68.5" x2="71" y1="541.06" y2="541.06" stroke="#c4c4c4" stroke-width="0.8"/><line x1="68.5" x2="71" y1="538.18" y2="538.18" stroke="#c4c4c4" stroke-width="0.8"/><line x1="66.5" x2="71" y1="535.30" y2="535.30" stroke="#9a9a9a" stroke-width="1.3"/><line x1="68.5" x2="71" y1="532.42" y2="532.42" stroke="#c4c4c4" stroke-width="0.8"/><line x1="68.5" x2="71" y1="529.54" y2="529.54" stroke="#c4c4c4" stroke-width="0.8"/><line x1="68.5" x2="71" y1="526.66" y2="526.66" stroke="#c4c4c4" stroke-width="0.8"/><line x1="68.5" x2="71" y1="523.78" y2="523.78" stroke="#c4c4c4" stroke-width="0.8"/><line x1="66.5" x2="71" y1="520.90" y2="520.90" stroke="#9a9a9a" stroke-width="1.3"/><line x1="842" x2="847" y1="677.00" y2="677.00" stroke="#9a9a9a" stroke-width="1.3"/><line x1="842" x2="845" y1="671.74" y2="671.74" stroke="#b0b0b0" stroke-width="0.9"/><line x1="842" x2="845" y1="666.48" y2="666.48" stroke="#b0b0b0" stroke-width="0.9"/><line x1="842" x2="845" y1="661.22" y2="661.22" stroke="#b0b0b0" stroke-width="0.9"/><line x1="842" x2="845" y1="655.96" y2="655.96" stroke="#b0b0b0" stroke-width="0.9"/><line x1="842" x2="847" y1="650.70" y2="650.70" stroke="#9a9a9a" stroke-width="1.3"/><line x1="842" x2="845" y1="645.44" y2="645.44" stroke="#b0b0b0" stroke-width="0.9"/><line x1="842" x2="845" y1="640.18" y2="640.18" stroke="#b0b0b0" stroke-width="0.9"/><line x1="842" x2="845" y1="634.92" y2="634.92" stroke="#b0b0b0" stroke-width="0.9"/><line x1="842" x2="845" y1="629.66" y2="629.66" stroke="#b0b0b0" stroke-width="0.9"/><line x1="842" x2="847" y1="624.40" y2="624.40" stroke="#9a9a9a" stroke-width="1.3"/><line x1="842" x2="845" y1="619.14" y2="619.14" stroke="#b0b0b0" stroke-width="0.9"/><line x1="842" x2="845" y1="613.88" y2="613.88" stroke="#b0b0b0" stroke-width="0.9"/><line x1="842" x2="845" y1="608.62" y2="608.62" stroke="#b0b0b0" stroke-width="0.9"/><line x1="842" x2="845" y1="603.36" y2="603.36" stroke="#b0b0b0" stroke-width="0.9"/><line x1="842" x2="847" y1="598.10" y2="598.10" stroke="#9a9a9a" stroke-width="1.3"/><line x1="842" x2="845" y1="592.84" y2="592.84" stroke="#b0b0b0" stroke-width="0.9"/><line x1="842" x2="845" y1="587.58" y2="587.58" stroke="#b0b0b0" stroke-width="0.9"/><line x1="842" x2="845" y1="582.32" y2="582.32" stroke="#b0b0b0" stroke-width="0.9"/><line x1="842" x2="845" y1="577.06" y2="577.06" stroke="#b0b0b0" stroke-width="0.9"/><line x1="842" x2="847" y1="571.80" y2="571.80" stroke="#9a9a9a" stroke-width="1.3"/><line x1="842" x2="845" y1="566.54" y2="566.54" stroke="#b0b0b0" stroke-width="0.9"/><line x1="842" x2="845" y1="561.28" y2="561.28" stroke="#b0b0b0" stroke-width="0.9"/><line x1="842" x2="845" y1="556.02" y2="556.02" stroke="#b0b0b0" stroke-width="0.9"/><line x1="842" x2="845" y1="550.76" y2="550.76" stroke="#b0b0b0" stroke-width="0.9"/><line x1="842" x2="847" y1="545.50" y2="545.50" stroke="#9a9a9a" stroke-width="1.3"/><line x1="842" x2="845" y1="540.24" y2="540.24" stroke="#b0b0b0" stroke-width="0.9"/><line x1="842" x2="845" y1="534.98" y2="534.98" stroke="#b0b0b0" stroke-width="0.9"/><line x1="842" x2="845" y1="529.72" y2="529.72" stroke="#b0b0b0" stroke-width="0.9"/><line x1="842" x2="845" y1="524.46" y2="524.46" stroke="#b0b0b0" stroke-width="0.9"/><line x1="842" x2="847" y1="519.20" y2="519.20" stroke="#9a9a9a" stroke-width="1.3"/><line x1="91.25" x2="91.25" y1="681" y2="685" stroke="#a0a0a0" stroke-width="1"/><line x1="110.19" x2="110.19" y1="681" y2="684" stroke="#c8c8c8" stroke-width="1"/><line x1="129.12" x2="129.12" y1="681" y2="684" stroke="#c8c8c8" stroke-width="1"/><line x1="148.06" x2="148.06" y1="681" y2="684" stroke="#c8c8c8" stroke-width="1"/><line x1="167.00" x2="167.00" y1="681" y2="685" stroke="#a0a0a0" stroke-width="1"/><line x1="185.94" x2="185.94" y1="681" y2="684" stroke="#c8c8c8" stroke-width="1"/><line x1="204.88" x2="204.88" y1="681" y2="684" stroke="#c8c8c8" stroke-width="1"/><line x1="223.81" x2="223.81" y1="681" y2="684" stroke="#c8c8c8" stroke-width="1"/><line x1="242.75" x2="242.75" y1="681" y2="685" stroke="#a0a0a0" stroke-width="1"/><line x1="261.69" x2="261.69" y1="681" y2="684" stroke="#c8c8c8" stroke-width="1"/><line x1="280.62" x2="280.62" y1="681" y2="684" stroke="#c8c8c8" stroke-width="1"/><line x1="299.56" x2="299.56" y1="681" y2="684" stroke="#c8c8c8" stroke-width="1"/><line x1="318.50" x2="318.50" y1="681" y2="685" stroke="#a0a0a0" stroke-width="1"/><line x1="337.44" x2="337.44" y1="681" y2="684" stroke="#c8c8c8" stroke-width="1"/><line x1="356.38" x2="356.38" y1="681" y2="684" stroke="#c8c8c8" stroke-width="1"/><line x1="375.31" x2="375.31" y1="681" y2="684" stroke="#c8c8c8" stroke-width="1"/><line x1="394.25" x2="394.25" y1="681" y2="685" stroke="#a0a0a0" stroke-width="1"/><line x1="413.19" x2="413.19" y1="681" y2="684" stroke="#c8c8c8" stroke-width="1"/><line x1="432.12" x2="432.12" y1="681" y2="684" stroke="#c8c8c8" stroke-width="1"/><line x1="451.06" x2="451.06" y1="681" y2="684" stroke="#c8c8c8" stroke-width="1"/><line x1="470.00" x2="470.00" y1="681" y2="685" stroke="#a0a0a0" stroke-width="1"/><line x1="488.94" x2="488.94" y1="681" y2="684" stroke="#c8c8c8" stroke-width="1"/><line x1="507.88" x2="507.88" y1="681" y2="684" stroke="#c8c8c8" stroke-width="1"/><line x1="526.81" x2="526.81" y1="681" y2="684" stroke="#c8c8c8" stroke-width="1"/><line x1="545.75" x2="545.75" y1="681" y2="685" stroke="#a0a0a0" stroke-width="1"/><line x1="564.69" x2="564.69" y1="681" y2="684" stroke="#c8c8c8" stroke-width="1"/><line x1="583.62" x2="583.62" y1="681" y2="684" stroke="#c8c8c8" stroke-width="1"/><line x1="602.56" x2="602.56" y1="681" y2="684" stroke="#c8c8c8" stroke-width="1"/><line x1="621.50" x2="621.50" y1="681" y2="685" stroke="#a0a0a0" stroke-width="1"/><line x1="640.44" x2="640.44" y1="681" y2="684" stroke="#c8c8c8" stroke-width="1"/><line x1="659.38" x2="659.38" y1="681" y2="684" stroke="#c8c8c8" stroke-width="1"/><line x1="678.31" x2="678.31" y1="681" y2="684" stroke="#c8c8c8" stroke-width="1"/><line x1="697.25" x2="697.25" y1="681" y2="685" stroke="#a0a0a0" stroke-width="1"/><line x1="716.19" x2="716.19" y1="681" y2="684" stroke="#c8c8c8" stroke-width="1"/><line x1="735.12" x2="735.12" y1="681" y2="684" stroke="#c8c8c8" stroke-width="1"/><line x1="754.06" x2="754.06" y1="681" y2="684" stroke="#c8c8c8" stroke-width="1"/><line x1="773.00" x2="773.00" y1="681" y2="685" stroke="#a0a0a0" stroke-width="1"/><line x1="791.94" x2="791.94" y1="681" y2="684" stroke="#c8c8c8" stroke-width="1"/><line x1="810.88" x2="810.88" y1="681" y2="684" stroke="#c8c8c8" stroke-width="1"/><line x1="829.81" x2="829.81" y1="681" y2="684" stroke="#c8c8c8" stroke-width="1"/><rect x="81.75" y="543.70" width="19.00" height="115.74" fill="#e00000" stroke="#1a1a1a" stroke-width="1"/><rect x="81.75" y="659.44" width="19.00" height="19.86" fill="#0018cc" stroke="#1a1a1a" stroke-width="1"/><rect x="107.00" y="540.02" width="19.00" height="118.38" fill="#e00000" stroke="#1a1a1a" stroke-width="1"/><rect x="107.00" y="658.40" width="19.00" height="20.90" fill="#0018cc" stroke="#1a1a1a" stroke-width="1"/><rect x="132.25" y="540.45" width="19.00" height="118.15" fill="#e00000" stroke="#1a1a1a" stroke-width="1"/><rect x="132.25" y="658.60" width="19.00" height="20.70" fill="#0018cc" stroke="#1a1a1a" stroke-width="1"/><rect x="157.50" y="537.34" width="19.00" height="120.29" fill="#e00000" stroke="#1a1a1a" stroke-width="1"/><rect x="157.50" y="657.63" width="19.00" height="21.67" fill="#0018cc" stroke="#1a1a1a" stroke-width="1"/><rect x="182.75" y="535.90" width="19.00" height="121.50" fill="#e00000" stroke="#1a1a1a" stroke-width="1"/><rect x="182.75" y="657.40" width="19.00" height="21.90" fill="#0018cc" stroke="#1a1a1a" stroke-width="1"/><rect x="208.00" y="533.02" width="19.00" height="123.54" fill="#e00000" stroke="#1a1a1a" stroke-width="1"/><rect x="208.00" y="656.56" width="19.00" height="22.74" fill="#0018cc" stroke="#1a1a1a" stroke-width="1"/><rect x="233.25" y="533.19" width="19.00" height="122.82" fill="#e00000" stroke="#1a1a1a" stroke-width="1"/><rect x="233.25" y="656.01" width="19.00" height="23.29" fill="#0018cc" stroke="#1a1a1a" stroke-width="1"/><rect x="258.50" y="536.65" width="19.00" height="118.79" fill="#e00000" stroke="#1a1a1a" stroke-width="1"/><rect x="258.50" y="655.44" width="19.00" height="23.86" fill="#0018cc" stroke="#1a1a1a" stroke-width="1"/><rect x="283.75" y="534.75" width="19.00" height="119.80" fill="#e00000" stroke="#1a1a1a" stroke-width="1"/><rect x="283.75" y="654.54" width="19.00" height="24.76" fill="#0018cc" stroke="#1a1a1a" stroke-width="1"/><rect x="309.00" y="534.40" width="19.00" height="119.28" fill="#e00000" stroke="#1a1a1a" stroke-width="1"/><rect x="309.00" y="653.68" width="19.00" height="25.62" fill="#0018cc" stroke="#1a1a1a" stroke-width="1"/><rect x="334.25" y="534.09" width="19.00" height="119.59" fill="#e00000" stroke="#1a1a1a" stroke-width="1"/><rect x="334.25" y="653.68" width="19.00" height="25.62" fill="#0018cc" stroke="#1a1a1a" stroke-width="1"/><rect x="359.50" y="534.03" width="19.00" height="116.94" fill="#e00000" stroke="#1a1a1a" stroke-width="1"/><rect x="359.50" y="650.97" width="19.00" height="28.33" fill="#0018cc" stroke="#1a1a1a" stroke-width="1"/><rect x="384.75" y="538.49" width="19.00" height="114.44" fill="#e00000" stroke="#1a1a1a" stroke-width="1"/><rect x="384.75" y="652.93" width="19.00" height="26.37" fill="#0018cc" stroke="#1a1a1a" stroke-width="1"/><rect x="410.00" y="537.34" width="19.00" height="117.90" fill="#e00000" stroke="#1a1a1a" stroke-width="1"/><rect x="410.00" y="655.24" width="19.00" height="24.06" fill="#0018cc" stroke="#1a1a1a" stroke-width="1"/><rect x="435.25" y="536.91" width="19.00" height="122.53" fill="#e00000" stroke="#1a1a1a" stroke-width="1"/><rect x="435.25" y="659.44" width="19.00" height="19.86" fill="#0018cc" stroke="#1a1a1a" stroke-width="1"/><rect x="460.50" y="537.14" width="19.00" height="124.12" fill="#e00000" stroke="#1a1a1a" stroke-width="1"/><rect x="460.50" y="661.25" width="19.00" height="18.05" fill="#0018cc" stroke="#1a1a1a" stroke-width="1"/><rect x="485.75" y="534.60" width="19.00" height="124.84" fill="#e00000" stroke="#1a1a1a" stroke-width="1"/><rect x="485.75" y="659.44" width="19.00" height="19.86" fill="#0018cc" stroke="#1a1a1a" stroke-width="1"/><rect x="511.00" y="531.58" width="19.00" height="129.10" fill="#e00000" stroke="#1a1a1a" stroke-width="1"/><rect x="511.00" y="660.68" width="19.00" height="18.62" fill="#0018cc" stroke="#1a1a1a" stroke-width="1"/><rect x="536.25" y="533.94" width="19.00" height="127.92" fill="#e00000" stroke="#1a1a1a" stroke-width="1"/><rect x="536.25" y="661.86" width="19.00" height="17.44" fill="#0018cc" stroke="#1a1a1a" stroke-width="1"/><rect x="561.50" y="534.69" width="19.00" height="122.62" fill="#e00000" stroke="#1a1a1a" stroke-width="1"/><rect x="561.50" y="657.31" width="19.00" height="21.99" fill="#0018cc" stroke="#1a1a1a" stroke-width="1"/><rect x="586.75" y="535.32" width="19.00" height="123.97" fill="#e00000" stroke="#1a1a1a" stroke-width="1"/><rect x="586.75" y="659.30" width="19.00" height="20.00" fill="#0018cc" stroke="#1a1a1a" stroke-width="1"/><rect x="612.00" y="534.29" width="19.00" height="125.73" fill="#e00000" stroke="#1a1a1a" stroke-width="1"/><rect x="612.00" y="660.02" width="19.00" height="19.28" fill="#0018cc" stroke="#1a1a1a" stroke-width="1"/><rect x="637.25" y="534.29" width="19.00" height="125.90" fill="#e00000" stroke="#1a1a1a" stroke-width="1"/><rect x="637.25" y="660.19" width="19.00" height="19.11" fill="#0018cc" stroke="#1a1a1a" stroke-width="1"/><rect x="662.50" y="537.20" width="19.00" height="119.94" fill="#e00000" stroke="#1a1a1a" stroke-width="1"/><rect x="662.50" y="657.14" width="19.00" height="22.16" fill="#0018cc" stroke="#1a1a1a" stroke-width="1"/><rect x="687.75" y="533.02" width="19.00" height="123.25" fill="#e00000" stroke="#1a1a1a" stroke-width="1"/><rect x="687.75" y="656.27" width="19.00" height="23.03" fill="#0018cc" stroke="#1a1a1a" stroke-width="1"/><rect x="713.00" y="528.21" width="19.00" height="128.06" fill="#e00000" stroke="#1a1a1a" stroke-width="1"/><rect x="713.00" y="656.27" width="19.00" height="23.03" fill="#0018cc" stroke="#1a1a1a" stroke-width="1"/><rect x="738.25" y="527.00" width="19.00" height="129.56" fill="#e00000" stroke="#1a1a1a" stroke-width="1"/><rect x="738.25" y="656.56" width="19.00" height="22.74" fill="#0018cc" stroke="#1a1a1a" stroke-width="1"/><rect x="763.50" y="527.00" width="19.00" height="129.56" fill="#e00000" stroke="#1a1a1a" stroke-width="1"/><rect x="763.50" y="656.56" width="19.00" height="22.74" fill="#0018cc" stroke="#1a1a1a" stroke-width="1"/><rect x="788.75" y="527.00" width="19.00" height="129.56" fill="#e00000" stroke="#1a1a1a" stroke-width="1"/><rect x="788.75" y="656.56" width="19.00" height="22.74" fill="#0018cc" stroke="#1a1a1a" stroke-width="1"/><rect x="814.00" y="520.20" width="19.00" height="132.32" fill="#e00000" stroke="#1a1a1a" stroke-width="1"/><rect x="814.00" y="652.53" width="19.00" height="26.77" fill="#0018cc" stroke="#1a1a1a" stroke-width="1"/><line x1="72" x2="842" y1="517" y2="517" stroke="#6e6e6e" stroke-width="1.4"/><line x1="841.7" x2="841.7" y1="517" y2="680" stroke="#7a7a7a" stroke-width="1.5"/><line x1="72" x2="72" y1="516.5" y2="681" stroke="#000" stroke-width="2"/><line x1="71" x2="842.5" y1="679.8" y2="679.8" stroke="#000" stroke-width="2"/><polyline points="91.25,572.15 116.50,624.75 141.75,598.45 167.00,651.05 192.25,572.15 217.50,677.35 242.75,624.75 268.00,572.15 293.25,545.85 318.50,651.05 343.75,651.05 369.00,624.75 394.25,598.45 419.50,651.05 444.75,598.45 470.00,519.55 495.25,624.75 520.50,624.75 545.75,572.15 571.00,519.55 596.25,598.45 621.50,624.75 646.75,545.85 672.00,651.05 697.25,598.45 722.50,624.75 747.75,677.35 773.00,677.35 798.25,677.35 823.50,598.45" fill="none" stroke="#2f6b1f" stroke-width="1.1"/><polyline points="91.25,624.75 116.50,651.05 141.75,624.75 167.00,624.75 192.25,624.75 217.50,677.35 242.75,624.75 268.00,519.55 293.25,598.45 318.50,624.75 343.75,677.35 369.00,572.15 394.25,651.05 419.50,624.75 444.75,572.15 470.00,572.15 495.25,624.75 520.50,624.75 545.75,545.85 571.00,545.85 596.25,598.45 621.50,598.45 646.75,519.55 672.00,677.35 697.25,651.05 722.50,651.05 747.75,677.35 773.00,677.35 798.25,677.35 823.50,677.35" fill="none" stroke="#ffff00" stroke-width="1.1"/><rect x="88.75" y="569.65" width="5" height="5" fill="#1e6e1e" stroke="#111" stroke-width="1"/><rect x="114.00" y="622.25" width="5" height="5" fill="#1e6e1e" stroke="#111" stroke-width="1"/><rect x="139.25" y="595.95" width="5" height="5" fill="#1e6e1e" stroke="#111" stroke-width="1"/><rect x="164.50" y="648.55" width="5" height="5" fill="#1e6e1e" stroke="#111" stroke-width="1"/><rect x="189.75" y="569.65" width="5" height="5" fill="#1e6e1e" stroke="#111" stroke-width="1"/><rect x="215.00" y="674.85" width="5" height="5" fill="#1e6e1e" stroke="#111" stroke-width="1"/><rect x="240.25" y="622.25" width="5" height="5" fill="#1e6e1e" stroke="#111" stroke-width="1"/><rect x="265.50" y="569.65" width="5" height="5" fill="#1e6e1e" stroke="#111" stroke-width="1"/><rect x="290.75" y="543.35" width="5" height="5" fill="#1e6e1e" stroke="#111" stroke-width="1"/><rect x="316.00" y="648.55" width="5" height="5" fill="#1e6e1e" stroke="#111" stroke-width="1"/><rect x="341.25" y="648.55" width="5" height="5" fill="#1e6e1e" stroke="#111" stroke-width="1"/><rect x="366.50" y="622.25" width="5" height="5" fill="#1e6e1e" stroke="#111" stroke-width="1"/><rect x="391.75" y="595.95" width="5" height="5" fill="#1e6e1e" stroke="#111" stroke-width="1"/><rect x="417.00" y="648.55" width="5" height="5" fill="#1e6e1e" stroke="#111" stroke-width="1"/><rect x="442.25" y="595.95" width="5" height="5" fill="#1e6e1e" stroke="#111" stroke-width="1"/><rect x="467.50" y="517.05" width="5" height="5" fill="#1e6e1e" stroke="#111" stroke-width="1"/><rect x="492.75" y="622.25" width="5" height="5" fill="#1e6e1e" stroke="#111" stroke-width="1"/><rect x="518.00" y="622.25" width="5" height="5" fill="#1e6e1e" stroke="#111" stroke-width="1"/><rect x="543.25" y="569.65" width="5" height="5" fill="#1e6e1e" stroke="#111" stroke-width="1"/><rect x="568.50" y="517.05" width="5" height="5" fill="#1e6e1e" stroke="#111" stroke-width="1"/><rect x="593.75" y="595.95" width="5" height="5" fill="#1e6e1e" stroke="#111" stroke-width="1"/><rect x="619.00" y="622.25" width="5" height="5" fill="#1e6e1e" stroke="#111" stroke-width="1"/><rect x="644.25" y="543.35" width="5" height="5" fill="#1e6e1e" stroke="#111" stroke-width="1"/><rect x="669.50" y="648.55" width="5" height="5" fill="#1e6e1e" stroke="#111" stroke-width="1"/><rect x="694.75" y="595.95" width="5" height="5" fill="#1e6e1e" stroke="#111" stroke-width="1"/><rect x="720.00" y="622.25" width="5" height="5" fill="#1e6e1e" stroke="#111" stroke-width="1"/><rect x="745.25" y="674.85" width="5" height="5" fill="#1e6e1e" stroke="#111" stroke-width="1"/><rect x="770.50" y="674.85" width="5" height="5" fill="#1e6e1e" stroke="#111" stroke-width="1"/><rect x="795.75" y="674.85" width="5" height="5" fill="#1e6e1e" stroke="#111" stroke-width="1"/><rect x="821.00" y="595.95" width="5" height="5" fill="#1e6e1e" stroke="#111" stroke-width="1"/><rect x="88.75" y="622.25" width="5" height="5" fill="#ffff00" stroke="#2a2a2a" stroke-width="1"/><rect x="114.00" y="648.55" width="5" height="5" fill="#ffff00" stroke="#2a2a2a" stroke-width="1"/><rect x="139.25" y="622.25" width="5" height="5" fill="#ffff00" stroke="#2a2a2a" stroke-width="1"/><rect x="164.50" y="622.25" width="5" height="5" fill="#ffff00" stroke="#2a2a2a" stroke-width="1"/><rect x="189.75" y="622.25" width="5" height="5" fill="#ffff00" stroke="#2a2a2a" stroke-width="1"/><rect x="215.00" y="674.85" width="5" height="5" fill="#ffff00" stroke="#2a2a2a" stroke-width="1"/><rect x="240.25" y="622.25" width="5" height="5" fill="#ffff00" stroke="#2a2a2a" stroke-width="1"/><rect x="265.50" y="517.05" width="5" height="5" fill="#ffff00" stroke="#2a2a2a" stroke-width="1"/><rect x="290.75" y="595.95" width="5" height="5" fill="#ffff00" stroke="#2a2a2a" stroke-width="1"/><rect x="316.00" y="622.25" width="5" height="5" fill="#ffff00" stroke="#2a2a2a" stroke-width="1"/><rect x="341.25" y="674.85" width="5" height="5" fill="#ffff00" stroke="#2a2a2a" stroke-width="1"/><rect x="366.50" y="569.65" width="5" height="5" fill="#ffff00" stroke="#2a2a2a" stroke-width="1"/><rect x="391.75" y="648.55" width="5" height="5" fill="#ffff00" stroke="#2a2a2a" stroke-width="1"/><rect x="417.00" y="622.25" width="5" height="5" fill="#ffff00" stroke="#2a2a2a" stroke-width="1"/><rect x="442.25" y="569.65" width="5" height="5" fill="#ffff00" stroke="#2a2a2a" stroke-width="1"/><rect x="467.50" y="569.65" width="5" height="5" fill="#ffff00" stroke="#2a2a2a" stroke-width="1"/><rect x="492.75" y="622.25" width="5" height="5" fill="#ffff00" stroke="#2a2a2a" stroke-width="1"/><rect x="518.00" y="622.25" width="5" height="5" fill="#ffff00" stroke="#2a2a2a" stroke-width="1"/><rect x="543.25" y="543.35" width="5" height="5" fill="#ffff00" stroke="#2a2a2a" stroke-width="1"/><rect x="568.50" y="543.35" width="5" height="5" fill="#ffff00" stroke="#2a2a2a" stroke-width="1"/><rect x="593.75" y="595.95" width="5" height="5" fill="#ffff00" stroke="#2a2a2a" stroke-width="1"/><rect x="619.00" y="595.95" width="5" height="5" fill="#ffff00" stroke="#2a2a2a" stroke-width="1"/><rect x="644.25" y="517.05" width="5" height="5" fill="#ffff00" stroke="#2a2a2a" stroke-width="1"/><rect x="669.50" y="674.85" width="5" height="5" fill="#ffff00" stroke="#2a2a2a" stroke-width="1"/><rect x="694.75" y="648.55" width="5" height="5" fill="#ffff00" stroke="#2a2a2a" stroke-width="1"/><rect x="720.00" y="648.55" width="5" height="5" fill="#ffff00" stroke="#2a2a2a" stroke-width="1"/><rect x="745.25" y="674.85" width="5" height="5" fill="#ffff00" stroke="#2a2a2a" stroke-width="1"/><rect x="770.50" y="674.85" width="5" height="5" fill="#ffff00" stroke="#2a2a2a" stroke-width="1"/><rect x="795.75" y="674.85" width="5" height="5" fill="#ffff00" stroke="#2a2a2a" stroke-width="1"/><rect x="821.00" y="674.85" width="5" height="5" fill="#ffff00" stroke="#2a2a2a" stroke-width="1"/></svg>
<div style="position:absolute;left:30px;top:670px;width:35px;font-size:10.5px;line-height:20px;font-weight:400;color:#000;text-align:right;white-space:pre;">0</div>
<div style="position:absolute;left:30px;top:656px;width:35px;font-size:10.5px;line-height:20px;font-weight:400;color:#000;text-align:right;white-space:pre;">5</div>
<div style="position:absolute;left:30px;top:641px;width:35px;font-size:10.5px;line-height:20px;font-weight:400;color:#000;text-align:right;white-space:pre;">10</div>
<div style="position:absolute;left:30px;top:627px;width:35px;font-size:10.5px;line-height:20px;font-weight:400;color:#000;text-align:right;white-space:pre;">15</div>
<div style="position:absolute;left:30px;top:613px;width:35px;font-size:10.5px;line-height:20px;font-weight:400;color:#000;text-align:right;white-space:pre;">20</div>
<div style="position:absolute;left:30px;top:598px;width:35px;font-size:10.5px;line-height:20px;font-weight:400;color:#000;text-align:right;white-space:pre;">25</div>
<div style="position:absolute;left:30px;top:584px;width:35px;font-size:10.5px;line-height:20px;font-weight:400;color:#000;text-align:right;white-space:pre;">30</div>
<div style="position:absolute;left:30px;top:569px;width:35px;font-size:10.5px;line-height:20px;font-weight:400;color:#000;text-align:right;white-space:pre;">35</div>
<div style="position:absolute;left:30px;top:555px;width:35px;font-size:10.5px;line-height:20px;font-weight:400;color:#000;text-align:right;white-space:pre;">40</div>
<div style="position:absolute;left:30px;top:541px;width:35px;font-size:10.5px;line-height:20px;font-weight:400;color:#000;text-align:right;white-space:pre;">45</div>
<div style="position:absolute;left:30px;top:526px;width:35px;font-size:10.5px;line-height:20px;font-weight:400;color:#000;text-align:right;white-space:pre;">50</div>
<div style="position:absolute;left:30px;top:512px;width:35px;font-size:10.5px;line-height:20px;font-weight:400;color:#000;text-align:right;white-space:pre;">55</div>
<div style="position:absolute;left:848px;top:668px;font-size:10.5px;line-height:20px;font-weight:400;color:#000;text-align:left;white-space:pre;">0</div>
<div style="position:absolute;left:848px;top:642px;font-size:10.5px;line-height:20px;font-weight:400;color:#000;text-align:left;white-space:pre;">1</div>
<div style="position:absolute;left:848px;top:615px;font-size:10.5px;line-height:20px;font-weight:400;color:#000;text-align:left;white-space:pre;">2</div>
<div style="position:absolute;left:848px;top:589px;font-size:10.5px;line-height:20px;font-weight:400;color:#000;text-align:left;white-space:pre;">3</div>
<div style="position:absolute;left:848px;top:563px;font-size:10.5px;line-height:20px;font-weight:400;color:#000;text-align:left;white-space:pre;">4</div>
<div style="position:absolute;left:848px;top:537px;font-size:10.5px;line-height:20px;font-weight:400;color:#000;text-align:left;white-space:pre;">5</div>
<div style="position:absolute;left:848px;top:510px;font-size:10.5px;line-height:20px;font-weight:400;color:#000;text-align:left;white-space:pre;">6</div>
<div style="position:absolute;left:51.45px;top:682px;width:80px;font-size:9.4px;line-height:20px;font-weight:400;color:#000;text-align:center;white-space:pre;">siječanj 2021</div>
<div style="position:absolute;left:127.2px;top:682px;width:80px;font-size:9.4px;line-height:20px;font-weight:400;color:#000;text-align:center;white-space:pre;">travanj 2021</div>
<div style="position:absolute;left:202.95px;top:682px;width:80px;font-size:9.4px;line-height:20px;font-weight:400;color:#000;text-align:center;white-space:pre;">srpanj 2021</div>
<div style="position:absolute;left:278.7px;top:682px;width:80px;font-size:9.4px;line-height:20px;font-weight:400;color:#000;text-align:center;white-space:pre;">listopad 2021</div>
<div style="position:absolute;left:354.45px;top:682px;width:80px;font-size:9.4px;line-height:20px;font-weight:400;color:#000;text-align:center;white-space:pre;">siječanj 2022</div>
<div style="position:absolute;left:430.2px;top:682px;width:80px;font-size:9.4px;line-height:20px;font-weight:400;color:#000;text-align:center;white-space:pre;">travanj 2022</div>
<div style="position:absolute;left:505.95px;top:682px;width:80px;font-size:9.4px;line-height:20px;font-weight:400;color:#000;text-align:center;white-space:pre;">srpanj 2022</div>
<div style="position:absolute;left:581.7px;top:682px;width:80px;font-size:9.4px;line-height:20px;font-weight:400;color:#000;text-align:center;white-space:pre;">listopad 2022</div>
<div style="position:absolute;left:657.45px;top:682px;width:80px;font-size:9.4px;line-height:20px;font-weight:400;color:#000;text-align:center;white-space:pre;">siječanj 2023</div>
<div style="position:absolute;left:733.2px;top:682px;width:80px;font-size:9.4px;line-height:20px;font-weight:400;color:#000;text-align:center;white-space:pre;">travanj 2023</div>
<div style="position:absolute;left:894px;top:534px;width:62px;height:57px;border:1px solid #555;border-radius:2px;background:#fff;box-shadow:2px 2px 1px #9a9a9a"></div>
<div style="position:absolute;left:901px;top:539.5px;width:6px;height:6px;background:#0018cc;border:1px solid #222;"></div>
<div style="position:absolute;left:916px;top:533px;font-size:8.6px;line-height:20px;font-weight:400;color:#000;text-align:left;white-space:pre;">Muškarci</div>
<div style="position:absolute;left:901px;top:552.5px;width:6px;height:6px;background:#e00000;border:1px solid #222;"></div>
<div style="position:absolute;left:916px;top:546px;font-size:8.6px;line-height:20px;font-weight:400;color:#000;text-align:left;white-space:pre;">Žene</div>
<div style="position:absolute;left:900px;top:569px;width:10px;height:1px;background:#2f6b1f;"></div>
<div style="position:absolute;left:902px;top:566px;width:5px;height:5px;background:#1e6e1e;border:1px solid #222;"></div>
<div style="position:absolute;left:916px;top:559px;font-size:8.6px;line-height:20px;font-weight:400;color:#000;text-align:left;white-space:pre;">Uselili</div>
<div style="position:absolute;left:900px;top:582px;width:10px;height:1px;background:#ffff00;"></div>
<div style="position:absolute;left:902px;top:579px;width:5px;height:5px;background:#ffff00;border:1px solid #555;"></div>
<div style="position:absolute;left:916px;top:572px;font-size:8.6px;line-height:20px;font-weight:400;color:#000;text-align:left;white-space:pre;">Iselili</div>
</body></html>
